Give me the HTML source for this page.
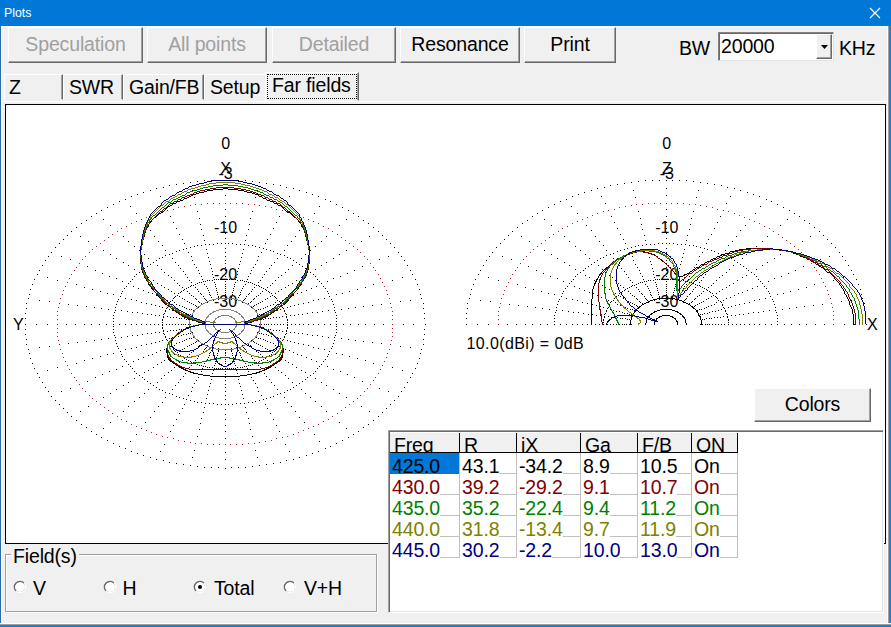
<!DOCTYPE html>
<html><head><meta charset="utf-8"><title>Plots</title>
<style>
html,body{margin:0;padding:0;}
body{width:891px;height:627px;overflow:hidden;background:#f0f0f0;font-family:"Liberation Sans",sans-serif;font-size:19.5px;letter-spacing:-0.15px;color:#000;position:relative;}
.abs{position:absolute;}
#titlebar{left:0;top:0;width:891px;height:26px;background:#0078d7;}
#title{left:4px;top:5px;letter-spacing:0;font-size:12.3px;color:#fff;line-height:16px;}
#bl{left:0;top:26px;width:1px;height:601px;background:#2b6ca8;box-shadow:1px 0 0 #fff;}
#br{left:887px;top:26px;width:4px;height:601px;background:linear-gradient(90deg,#fff 0,#fff 1px,#a0a0a0 1px,#a0a0a0 2px,#54708c 2px,#54708c 3px,#2d7dc4 3px);}
#bb{left:0;top:623px;width:891px;height:4px;background:linear-gradient(180deg,#fff 0,#fff 1px,#a0a0a0 1px,#a0a0a0 2px,#6a6a6a 2px,#6a6a6a 3px,#1883d7 3px);}
.btn{box-sizing:border-box;height:36px;top:27px;border:1px solid;border-color:#fff #696969 #696969 #fff;box-shadow:inset -1px -1px 0 #a0a0a0;background:#f0f0f0;text-align:center;line-height:33px;font-size:19.5px;}
.dis{color:#a0a0a0;}
.tab{top:75px;height:24px;line-height:24px;font-size:19.5px;white-space:nowrap;}
.tabbox{top:74px;height:26px;box-sizing:border-box;border:1px solid;border-color:#fff #696969 #f0f0f0 #fff;box-shadow:inset -1px 0 0 #a0a0a0;}
#panel{left:5px;top:104px;width:881px;height:440px;box-sizing:border-box;background:#fff;border:1px solid #000;border-top-color:#000;}
.lbl{letter-spacing:0;font-size:16px;line-height:18px;white-space:nowrap;margin-top:1.5px;}
</style></head><body>
<div id="titlebar" class="abs"></div>
<div id="title" class="abs">Plots</div>
<svg class="abs" style="left:869px;top:7px" width="12" height="12" viewBox="0 0 12 12"><path d="M1 1L11 11M11 1L1 11" stroke="#fff" stroke-width="1.2" fill="none"/></svg>
<div class="abs" style="left:1px;top:26px;width:888px;height:1px;background:#fff;"></div>
<div id="bl" class="abs"></div><div id="br" class="abs"></div><div id="bb" class="abs"></div>

<div class="abs btn dis" style="left:8px;width:135px;">Speculation</div>
<div class="abs btn dis" style="left:147px;width:120px;">All points</div>
<div class="abs btn dis" style="left:272px;width:124px;">Detailed</div>
<div class="abs btn" style="left:400px;width:120px;">Resonance</div>
<div class="abs btn" style="left:524px;width:92px;">Print</div>

<div class="abs" style="left:679px;top:37px;line-height:22px;">BW</div>
<div class="abs" style="left:718px;top:32px;width:116px;height:29px;box-sizing:border-box;background:#fff;border:1px solid;border-color:#828282 #e3e3e3 #e3e3e3 #828282;box-shadow:inset 1px 1px 0 #696969;"></div>
<div class="abs" style="left:721px;top:35px;line-height:22px;">20000</div>
<div class="abs" style="left:816px;top:34px;width:16px;height:25px;box-sizing:border-box;background:#f0f0f0;border:1px solid;border-color:#fff #696969 #696969 #fff;box-shadow:inset -1px -1px 0 #a0a0a0;"></div>
<svg class="abs" style="left:821px;top:45px" width="8" height="4" viewBox="0 0 8 4"><path d="M0 0H7L3.5 4Z" fill="#000"/></svg>
<div class="abs" style="left:839px;top:37px;line-height:22px;">KHz</div>

<div class="abs tabbox" style="left:4px;width:59px;"></div>
<div class="abs tabbox" style="left:63px;width:60px;"></div>
<div class="abs tabbox" style="left:123px;width:81px;"></div>
<div class="abs tabbox" style="left:204px;width:62px;border-right:none;box-shadow:none;"></div>
<div class="abs tab" style="left:9px;">Z</div>
<div class="abs tab" style="left:69px;">SWR</div>
<div class="abs tab" style="left:129px;">Gain/FB</div>
<div class="abs tab" style="left:210px;">Setup</div>
<div class="abs" style="left:265px;top:72px;width:94px;height:29px;box-sizing:border-box;background:#f0f0f0;border:1px solid;border-color:#fff #696969 #f0f0f0 #fff;box-shadow:inset -1px 0 0 #a0a0a0;"></div>
<div class="abs" style="left:267px;top:74px;width:90px;height:25px;box-sizing:border-box;border:1px dotted #000;"></div>
<div class="abs tab" style="left:272px;top:73px;">Far fields</div>

<div class="abs" style="left:2px;top:101px;width:886px;height:1px;background:#fff;"></div>
<div id="panel" class="abs"></div>
<div class="abs lbl" style="left:195.6px;width:60px;text-align:center;top:133.5px;">0</div>
<div class="abs lbl" style="left:195.6px;width:60px;text-align:center;top:158.5px;">X</div>
<div class="abs lbl" style="left:195.6px;width:60px;text-align:center;top:163px;">-3</div>
<div class="abs lbl" style="left:195.6px;width:60px;text-align:center;top:217px;">-10</div>
<div class="abs lbl" style="left:195.6px;width:60px;text-align:center;top:264.5px;">-20</div>
<div class="abs lbl" style="left:195.6px;width:60px;text-align:center;top:291px;">-30</div>
<div class="abs lbl" style="left:636.8px;width:60px;text-align:center;top:133.5px;">0</div>
<div class="abs lbl" style="left:636.8px;width:60px;text-align:center;top:158.5px;">Z</div>
<div class="abs lbl" style="left:636.8px;width:60px;text-align:center;top:163px;">-3</div>
<div class="abs lbl" style="left:636.8px;width:60px;text-align:center;top:217px;">-10</div>
<div class="abs lbl" style="left:636.8px;width:60px;text-align:center;top:264.5px;">-20</div>
<div class="abs lbl" style="left:636.8px;width:60px;text-align:center;top:291px;">-30</div>
<div class="abs lbl" style="left:13px;top:314px;">Y</div>
<div class="abs lbl" style="left:867px;top:314px;">X</div>
<div class="abs lbl" style="left:466.5px;top:333px;letter-spacing:0.4px;">10.0(dBi) = 0dB</div>

<div class="abs" style="left:6px;top:105px;width:878px;height:437px;overflow:hidden;">
<svg id="plot" width="878" height="437" viewBox="6 105 878 437">
<defs><clipPath id="hz"><rect x="440" y="100" width="445" height="225"/></clipPath></defs>
<g shape-rendering="crispEdges" fill="none" stroke-width="1"><path transform="translate(0,0.5)" stroke="#000" d="M225 180h1M231 180h1M238 180h1M245 180h1M252 181h1M259 182h1M266 183h1M273 184h1M280 185h1M286 187h1M293 188h1M299 190h1M306 192h1M312 194h1M318 196h1M325 199h1M330 201h1M336 204h1M342 207h1M348 210h1M353 213h1M358 216h1M363 220h1M368 223h1M373 227h1M378 231h1M382 235h1M386 239h1M390 243h1M394 247h1M398 252h1M401 256h1M404 260h1M407 265h1M410 270h1M412 274h1M415 279h1M417 284h1M419 289h1M420 294h1M421 298h1M423 303h1M423 308h1M424 313h1M424 318h1M425 324h1M424 329h1M424 334h1M423 339h1M423 344h1M421 349h1M420 353h1M419 358h1M417 363h1M415 368h1M412 373h1M410 377h1M407 382h1M404 387h1M401 391h1M398 396h1M394 400h1M390 404h1M386 408h1M382 412h1M378 416h1M373 420h1M368 424h1M363 427h1M358 431h1M353 434h1M348 437h1M342 440h1M336 443h1M330 446h1M325 448h1M318 451h1M312 453h1M306 455h1M299 457h1M293 459h1M286 460h1M280 462h1M273 463h1M266 464h1M259 465h1M252 466h1M245 467h1M238 467h1M231 467h1M225 468h1M218 467h1M211 467h1M204 467h1M197 466h1M190 465h1M183 464h1M176 463h1M169 462h1M163 460h1M156 459h1M150 457h1M143 455h1M137 453h1M131 451h1M125 448h1M119 446h1M113 443h1M107 440h1M101 437h1M96 434h1M91 431h1M86 427h1M81 424h1M76 420h1M71 416h1M67 412h1M63 408h1M59 404h1M55 400h1M51 396h1M48 391h1M45 387h1M42 382h1M39 377h1M37 373h1M34 368h1M32 363h1M30 358h1M29 353h1M28 349h1M26 344h1M26 339h1M25 334h1M25 329h1M25 324h1M25 318h1M25 313h1M26 308h1M26 303h1M28 298h1M29 294h1M30 289h1M32 284h1M34 279h1M37 274h1M39 270h1M42 265h1M45 260h1M48 256h1M51 252h1M55 247h1M59 243h1M63 239h1M67 235h1M71 231h1M76 227h1M81 223h1M86 220h1M91 216h1M96 213h1M101 210h1M107 207h1M113 204h1M119 201h1M125 199h1M131 196h1M137 194h1M143 192h1M150 190h1M156 188h1M163 187h1M169 185h1M176 184h1M183 183h1M190 182h1M197 181h1M204 180h1M211 180h1M218 180h1M225 243h1M228 243h1M232 243h1M236 244h1M240 244h1M244 244h1M248 245h1M252 245h1M255 246h1M259 247h1M263 248h1M266 249h1M270 250h1M273 251h1M277 253h1M280 254h1M284 255h1M287 257h1M290 258h1M293 260h1M296 262h1M299 264h1M302 266h1M305 268h1M307 270h1M310 272h1M313 274h1M315 276h1M317 279h1M319 281h1M321 283h1M323 286h1M325 288h1M327 291h1M328 293h1M329 296h1M331 299h1M332 301h1M333 304h1M334 307h1M334 310h1M335 312h1M336 315h1M336 318h1M336 321h1M336 324h1M336 326h1M336 329h1M336 332h1M335 335h1M334 337h1M334 340h1M333 343h1M332 346h1M331 348h1M329 351h1M328 354h1M327 356h1M325 359h1M323 361h1M321 364h1M319 366h1M317 368h1M315 371h1M313 373h1M310 375h1M307 377h1M305 379h1M302 381h1M299 383h1M296 385h1M293 387h1M290 389h1M287 390h1M284 392h1M280 393h1M277 394h1M273 396h1M270 397h1M266 398h1M263 399h1M259 400h1M255 401h1M252 402h1M248 402h1M244 403h1M240 403h1M236 403h1M232 404h1M228 404h1M225 404h1M221 404h1M217 404h1M213 403h1M209 403h1M205 403h1M201 402h1M197 402h1M194 401h1M190 400h1M186 399h1M183 398h1M179 397h1M176 396h1M172 394h1M169 393h1M165 392h1M162 390h1M159 389h1M156 387h1M153 385h1M150 383h1M147 381h1M144 379h1M142 377h1M139 375h1M136 373h1M134 371h1M132 368h1M130 366h1M128 364h1M126 361h1M124 359h1M122 356h1M121 354h1M120 351h1M118 348h1M117 346h1M116 343h1M115 340h1M115 337h1M114 335h1M113 332h1M113 329h1M113 326h1M113 324h1M113 321h1M113 318h1M113 315h1M114 312h1M115 310h1M115 307h1M116 304h1M117 301h1M118 299h1M120 296h1M121 293h1M122 291h1M124 288h1M126 286h1M128 283h1M130 281h1M132 279h1M134 276h1M136 274h1M139 272h1M142 270h1M144 268h1M147 266h1M150 264h1M153 262h1M156 260h1M159 258h1M162 257h1M165 255h1M169 254h1M172 253h1M176 251h1M179 250h1M183 249h1M186 248h1M190 247h1M194 246h1M197 245h1M201 245h1M205 244h1M209 244h1M213 244h1M217 243h1M221 243h1M225 279h1M227 279h1M229 279h1M231 279h1M233 279h1M235 279h1M237 280h1M240 280h1M242 280h1M244 281h1M246 281h1M248 282h1M250 282h1M252 283h1M254 284h1M256 285h1M258 285h1M259 286h1M261 287h1M263 288h1M265 289h1M266 290h1M268 291h1M269 292h1M271 293h1M272 295h1M274 296h1M275 297h1M276 298h1M277 300h1M279 301h1M280 302h1M281 304h1M281 305h1M282 307h1M283 308h1M284 310h1M284 311h1M285 313h1M286 314h1M286 316h1M286 317h1M287 319h1M287 320h1M287 322h1M287 324h1M287 325h1M287 327h1M287 328h1M286 330h1M286 331h1M286 333h1M285 334h1M284 336h1M284 337h1M283 339h1M282 340h1M281 342h1M281 343h1M280 345h1M279 346h1M277 347h1M276 349h1M275 350h1M274 351h1M272 352h1M271 354h1M269 355h1M268 356h1M266 357h1M265 358h1M263 359h1M261 360h1M259 361h1M258 362h1M256 362h1M254 363h1M252 364h1M250 365h1M248 365h1M246 366h1M244 366h1M242 367h1M240 367h1M237 367h1M235 368h1M233 368h1M231 368h1M229 368h1M227 368h1M225 368h1M222 368h1M220 368h1M218 368h1M216 368h1M214 368h1M212 367h1M209 367h1M207 367h1M205 366h1M203 366h1M201 365h1M199 365h1M197 364h1M195 363h1M193 362h1M191 362h1M190 361h1M188 360h1M186 359h1M184 358h1M183 357h1M181 356h1M180 355h1M178 354h1M177 352h1M175 351h1M174 350h1M173 349h1M172 347h1M170 346h1M169 345h1M168 343h1M168 342h1M167 340h1M166 339h1M165 337h1M165 336h1M164 334h1M163 333h1M163 331h1M163 330h1M162 328h1M162 327h1M162 325h1M162 324h1M162 322h1M162 320h1M162 319h1M163 317h1M163 316h1M163 314h1M164 313h1M165 311h1M165 310h1M166 308h1M167 307h1M168 305h1M168 304h1M169 302h1M170 301h1M172 300h1M173 298h1M174 297h1M175 296h1M177 295h1M178 293h1M180 292h1M181 291h1M183 290h1M184 289h1M186 288h1M188 287h1M190 286h1M191 285h1M193 285h1M195 284h1M197 283h1M199 282h1M201 282h1M203 281h1M205 281h1M207 280h1M209 280h1M212 280h1M214 279h1M216 279h1M218 279h1M220 279h1M222 279h1M225 188h1M225 195h1M225 209h1M225 216h1M225 222h1M225 228h1M225 233h1M225 238h1M225 248h1M225 252h1M225 256h1M225 260h1M225 263h1M225 267h1M225 270h1M225 273h1M225 276h1M225 281h1M225 284h1M225 286h1M225 288h1M225 290h1M225 292h1M225 294h1M225 295h1M225 297h1M225 298h1M257 190h1M255 197h1M252 211h1M250 218h1M249 224h1M248 229h1M246 235h1M245 240h1M243 249h1M242 253h1M241 257h1M240 261h1M239 264h1M238 268h1M237 271h1M237 274h1M236 277h1M235 282h1M234 284h1M234 286h1M233 288h1M233 290h1M232 292h1M232 294h1M231 296h1M231 297h1M231 299h1M289 196h1M285 203h1M279 216h1M276 222h1M273 228h1M270 234h1M267 239h1M265 243h1M261 252h1M258 256h1M257 260h1M255 264h1M253 267h1M251 270h1M250 273h1M248 276h1M247 279h1M245 284h1M243 286h1M242 288h1M241 290h1M240 292h1M240 294h1M239 295h1M238 297h1M237 299h1M236 300h1M319 206h1M314 213h1M304 225h1M299 230h1M295 236h1M291 241h1M287 245h1M284 250h1M277 258h1M274 262h1M271 265h1M269 268h1M266 271h1M264 274h1M262 277h1M260 280h1M258 282h1M254 287h1M252 289h1M251 291h1M249 293h1M248 294h1M246 296h1M245 298h1M244 299h1M243 300h1M242 302h1M346 219h1M339 225h1M326 236h1M321 241h1M315 246h1M310 250h1M305 254h1M301 258h1M292 265h1M288 269h1M285 272h1M281 275h1M278 277h1M275 280h1M272 283h1M270 285h1M267 287h1M262 291h1M260 293h1M258 295h1M256 296h1M254 298h1M253 299h1M251 301h1M250 302h1M248 303h1M247 304h1M369 236h1M361 241h1M346 250h1M339 254h1M333 258h1M326 262h1M321 265h1M315 269h1M305 275h1M301 277h1M296 280h1M292 283h1M288 285h1M285 287h1M281 289h1M278 291h1M275 293h1M270 296h1M267 298h1M265 299h1M262 301h1M260 302h1M258 303h1M256 304h1M254 305h1M253 306h1M251 307h1M388 256h1M379 259h1M362 266h1M354 270h1M347 273h1M340 276h1M333 278h1M327 281h1M316 286h1M311 288h1M306 290h1M301 292h1M297 293h1M293 295h1M289 297h1M285 298h1M282 300h1M275 302h1M273 304h1M270 305h1M267 306h1M265 307h1M263 308h1M260 309h1M258 309h1M256 310h1M255 311h1M402 277h1M392 280h1M373 284h1M365 287h1M357 289h1M349 291h1M342 293h1M336 294h1M324 298h1M318 299h1M313 300h1M308 302h1M303 303h1M298 304h1M294 305h1M290 306h1M287 307h1M280 309h1M277 310h1M274 311h1M271 311h1M268 312h1M266 313h1M263 313h1M261 314h1M259 314h1M257 315h1M410 300h1M400 301h1M381 304h1M372 305h1M363 306h1M355 307h1M348 308h1M341 309h1M328 310h1M322 311h1M317 312h1M312 312h1M307 313h1M302 314h1M298 314h1M294 315h1M290 315h1M282 316h1M279 317h1M276 317h1M273 317h1M270 318h1M268 318h1M265 318h1M263 319h1M261 319h1M259 319h1M413 324h1M403 324h1M383 324h1M374 324h1M365 324h1M358 324h1M350 324h1M343 324h1M330 324h1M324 324h1M318 324h1M313 324h1M308 324h1M303 324h1M299 324h1M295 324h1M291 324h1M283 324h1M280 324h1M277 324h1M274 324h1M271 324h1M268 324h1M266 324h1M264 324h1M261 324h1M259 324h1M410 347h1M400 346h1M381 343h1M372 342h1M363 341h1M355 340h1M348 339h1M341 338h1M328 337h1M322 336h1M317 335h1M312 335h1M307 334h1M302 333h1M298 333h1M294 332h1M290 332h1M282 331h1M279 330h1M276 330h1M273 330h1M270 329h1M268 329h1M265 329h1M263 328h1M261 328h1M259 328h1M402 370h1M392 367h1M373 363h1M365 360h1M357 358h1M349 356h1M342 354h1M336 353h1M324 349h1M318 348h1M313 347h1M308 345h1M303 344h1M298 343h1M294 342h1M290 341h1M287 340h1M280 338h1M277 337h1M274 336h1M271 336h1M268 335h1M266 334h1M263 334h1M261 333h1M259 333h1M257 332h1M388 391h1M379 388h1M362 381h1M354 377h1M347 374h1M340 371h1M333 369h1M327 366h1M316 361h1M311 359h1M306 357h1M301 355h1M297 354h1M293 352h1M289 350h1M285 349h1M282 347h1M275 345h1M273 343h1M270 342h1M267 341h1M265 340h1M263 339h1M260 338h1M258 338h1M256 337h1M255 336h1M369 411h1M361 406h1M346 397h1M339 393h1M333 389h1M326 385h1M321 382h1M315 378h1M305 372h1M301 370h1M296 367h1M292 364h1M288 362h1M285 360h1M281 358h1M278 356h1M275 354h1M270 351h1M267 349h1M265 348h1M262 346h1M260 345h1M258 344h1M256 343h1M254 342h1M253 341h1M251 340h1M346 428h1M339 422h1M326 411h1M321 406h1M315 401h1M310 397h1M305 393h1M301 389h1M292 382h1M288 378h1M285 375h1M281 372h1M278 370h1M275 367h1M272 364h1M270 362h1M267 360h1M262 356h1M260 354h1M258 352h1M256 351h1M254 349h1M253 348h1M251 346h1M250 345h1M248 344h1M247 343h1M319 441h1M314 434h1M304 422h1M299 417h1M295 411h1M291 406h1M287 402h1M284 397h1M277 389h1M274 385h1M271 382h1M269 379h1M266 376h1M264 373h1M262 370h1M260 367h1M258 365h1M254 360h1M252 358h1M251 356h1M249 354h1M248 353h1M246 351h1M245 349h1M244 348h1M243 347h1M242 345h1M289 451h1M285 444h1M279 431h1M276 425h1M273 419h1M270 413h1M267 408h1M265 404h1M261 395h1M258 391h1M257 387h1M255 383h1M253 380h1M251 377h1M250 374h1M248 371h1M247 368h1M245 363h1M243 361h1M242 359h1M241 357h1M240 355h1M240 353h1M239 352h1M238 350h1M237 348h1M236 347h1M257 457h1M255 450h1M252 436h1M250 429h1M249 423h1M248 418h1M246 412h1M245 407h1M243 398h1M242 394h1M241 390h1M240 386h1M239 383h1M238 379h1M237 376h1M237 373h1M236 370h1M235 365h1M234 363h1M234 361h1M233 359h1M233 357h1M232 355h1M232 353h1M231 351h1M231 350h1M231 348h1M225 459h1M225 452h1M225 438h1M225 431h1M225 425h1M225 419h1M225 414h1M225 409h1M225 399h1M225 395h1M225 391h1M225 387h1M225 384h1M225 380h1M225 377h1M225 374h1M225 371h1M225 366h1M225 363h1M225 361h1M225 359h1M225 357h1M225 355h1M225 353h1M225 352h1M225 350h1M225 349h1M192 457h1M194 450h1M197 436h1M199 429h1M200 423h1M201 418h1M203 412h1M204 407h1M206 398h1M207 394h1M208 390h1M209 386h1M210 383h1M211 379h1M212 376h1M212 373h1M213 370h1M214 365h1M215 363h1M215 361h1M216 359h1M216 357h1M217 355h1M217 353h1M218 351h1M218 350h1M218 348h1M160 451h1M164 444h1M170 431h1M173 425h1M176 419h1M179 413h1M182 408h1M184 404h1M188 395h1M191 391h1M192 387h1M194 383h1M196 380h1M198 377h1M199 374h1M201 371h1M202 368h1M204 363h1M206 361h1M207 359h1M208 357h1M209 355h1M209 353h1M210 352h1M211 350h1M212 348h1M213 347h1M130 441h1M136 434h1M145 422h1M150 417h1M154 411h1M158 406h1M162 402h1M165 397h1M172 389h1M175 385h1M178 382h1M180 379h1M183 376h1M185 373h1M187 370h1M189 367h1M191 365h1M195 360h1M197 358h1M198 356h1M200 354h1M201 353h1M203 351h1M204 349h1M205 348h1M206 347h1M207 345h1M103 428h1M110 422h1M123 411h1M128 406h1M134 401h1M139 397h1M144 393h1M148 389h1M157 382h1M161 378h1M164 375h1M168 372h1M171 370h1M174 367h1M177 364h1M179 362h1M182 360h1M187 356h1M189 354h1M191 352h1M193 351h1M195 349h1M196 348h1M198 346h1M199 345h1M201 344h1M202 343h1M80 411h1M88 406h1M103 397h1M110 393h1M116 389h1M123 385h1M128 382h1M134 378h1M144 372h1M148 370h1M153 367h1M157 364h1M161 362h1M164 360h1M168 358h1M171 356h1M174 354h1M179 351h1M182 349h1M184 348h1M187 346h1M189 345h1M191 344h1M193 343h1M195 342h1M196 341h1M198 340h1M61 391h1M70 388h1M87 381h1M95 377h1M102 374h1M109 371h1M116 369h1M122 366h1M133 361h1M138 359h1M143 357h1M148 355h1M152 354h1M156 352h1M160 350h1M164 349h1M167 347h1M174 345h1M176 343h1M179 342h1M182 341h1M184 340h1M186 339h1M189 338h1M191 338h1M193 337h1M194 336h1M47 370h1M57 367h1M76 363h1M84 360h1M92 358h1M100 356h1M107 354h1M113 353h1M125 349h1M131 348h1M136 347h1M141 345h1M146 344h1M151 343h1M155 342h1M159 341h1M162 340h1M169 338h1M172 337h1M175 336h1M178 336h1M181 335h1M183 334h1M186 334h1M188 333h1M190 333h1M192 332h1M39 347h1M49 346h1M68 343h1M77 342h1M86 341h1M94 340h1M101 339h1M108 338h1M121 337h1M127 336h1M132 335h1M137 335h1M142 334h1M147 333h1M151 333h1M155 332h1M159 332h1M167 331h1M170 330h1M173 330h1M176 330h1M179 329h1M181 329h1M184 329h1M186 328h1M188 328h1M190 328h1M36 324h1M47 324h1M66 324h1M75 324h1M84 324h1M91 324h1M99 324h1M106 324h1M119 324h1M125 324h1M131 324h1M136 324h1M141 324h1M146 324h1M150 324h1M154 324h1M158 324h1M166 324h1M169 324h1M172 324h1M175 324h1M178 324h1M181 324h1M183 324h1M185 324h1M188 324h1M190 324h1M39 300h1M49 301h1M68 304h1M77 305h1M86 306h1M94 307h1M101 308h1M108 309h1M121 310h1M127 311h1M132 312h1M137 312h1M142 313h1M147 314h1M151 314h1M155 315h1M159 315h1M167 316h1M170 317h1M173 317h1M176 317h1M179 318h1M181 318h1M184 318h1M186 319h1M188 319h1M190 319h1M47 277h1M57 280h1M76 284h1M84 287h1M92 289h1M100 291h1M107 293h1M113 294h1M125 298h1M131 299h1M136 300h1M141 302h1M146 303h1M151 304h1M155 305h1M159 306h1M162 307h1M169 309h1M172 310h1M175 311h1M178 311h1M181 312h1M183 313h1M186 313h1M188 314h1M190 314h1M192 315h1M61 256h1M70 259h1M87 266h1M95 270h1M102 273h1M109 276h1M116 278h1M122 281h1M133 286h1M138 288h1M143 290h1M148 292h1M152 293h1M156 295h1M160 297h1M164 298h1M167 300h1M174 302h1M176 304h1M179 305h1M182 306h1M184 307h1M186 308h1M189 309h1M191 309h1M193 310h1M194 311h1M80 236h1M88 241h1M103 250h1M110 254h1M116 258h1M123 262h1M128 265h1M134 269h1M144 275h1M148 277h1M153 280h1M157 283h1M161 285h1M164 287h1M168 289h1M171 291h1M174 293h1M179 296h1M182 298h1M184 299h1M187 301h1M189 302h1M191 303h1M193 304h1M195 305h1M196 306h1M198 307h1M103 219h1M110 225h1M123 236h1M128 241h1M134 246h1M139 250h1M144 254h1M148 258h1M157 265h1M161 269h1M164 272h1M168 275h1M171 277h1M174 280h1M177 283h1M179 285h1M182 287h1M187 291h1M189 293h1M191 295h1M193 296h1M195 298h1M196 299h1M198 301h1M199 302h1M201 303h1M202 304h1M130 206h1M136 213h1M145 225h1M150 230h1M154 236h1M158 241h1M162 245h1M165 250h1M172 258h1M175 262h1M178 265h1M180 268h1M183 271h1M185 274h1M187 277h1M189 280h1M191 282h1M195 287h1M197 289h1M198 291h1M200 293h1M201 294h1M203 296h1M204 298h1M205 299h1M206 300h1M207 302h1M160 196h1M164 203h1M170 216h1M173 222h1M176 228h1M179 234h1M182 239h1M184 243h1M188 252h1M191 256h1M192 260h1M194 264h1M196 267h1M198 270h1M199 273h1M201 276h1M202 279h1M204 284h1M206 286h1M207 288h1M208 290h1M209 292h1M209 294h1M210 295h1M211 297h1M212 299h1M213 300h1M192 190h1M194 197h1M197 211h1M199 218h1M200 224h1M201 229h1M203 235h1M204 240h1M206 249h1M207 253h1M208 257h1M209 261h1M210 264h1M211 268h1M212 271h1M212 274h1M213 277h1M214 282h1M215 284h1M215 286h1M216 288h1M216 290h1M217 292h1M217 294h1M218 296h1M218 297h1M218 299h1M666 180h1M672 180h1M679 180h1M686 180h1M693 181h1M700 182h1M707 183h1M714 184h1M721 185h1M727 187h1M734 188h1M740 190h1M747 192h1M753 194h1M759 196h1M766 199h1M771 201h1M777 204h1M783 207h1M789 210h1M794 213h1M799 216h1M804 220h1M809 223h1M814 227h1M819 231h1M823 235h1M827 239h1M831 243h1M835 247h1M839 252h1M842 256h1M845 260h1M848 265h1M851 270h1M853 274h1M856 279h1M858 284h1M860 289h1M861 294h1M862 298h1M864 303h1M864 308h1M865 313h1M865 318h1M866 324h1M466 324h1M466 318h1M466 313h1M467 308h1M467 303h1M469 298h1M470 294h1M471 289h1M473 284h1M475 279h1M478 274h1M480 270h1M483 265h1M486 260h1M489 256h1M492 252h1M496 247h1M500 243h1M504 239h1M508 235h1M512 231h1M517 227h1M522 223h1M527 220h1M532 216h1M537 213h1M542 210h1M548 207h1M554 204h1M560 201h1M566 199h1M572 196h1M578 194h1M584 192h1M591 190h1M597 188h1M604 187h1M610 185h1M617 184h1M624 183h1M631 182h1M638 181h1M645 180h1M652 180h1M659 180h1M666 243h1M669 243h1M673 243h1M677 244h1M681 244h1M685 244h1M689 245h1M693 245h1M696 246h1M700 247h1M704 248h1M707 249h1M711 250h1M714 251h1M718 253h1M721 254h1M725 255h1M728 257h1M731 258h1M734 260h1M737 262h1M740 264h1M743 266h1M746 268h1M748 270h1M751 272h1M754 274h1M756 276h1M758 279h1M760 281h1M762 283h1M764 286h1M766 288h1M768 291h1M769 293h1M770 296h1M772 299h1M773 301h1M774 304h1M775 307h1M775 310h1M776 312h1M777 315h1M777 318h1M777 321h1M777 324h1M554 324h1M554 321h1M554 318h1M554 315h1M555 312h1M556 310h1M556 307h1M557 304h1M558 301h1M559 299h1M561 296h1M562 293h1M563 291h1M565 288h1M567 286h1M569 283h1M571 281h1M573 279h1M575 276h1M577 274h1M580 272h1M583 270h1M585 268h1M588 266h1M591 264h1M594 262h1M597 260h1M600 258h1M603 257h1M606 255h1M610 254h1M613 253h1M617 251h1M620 250h1M624 249h1M627 248h1M631 247h1M635 246h1M638 245h1M642 245h1M646 244h1M650 244h1M654 244h1M658 243h1M662 243h1M666 279h1M668 279h1M670 279h1M672 279h1M674 279h1M676 279h1M678 280h1M681 280h1M683 280h1M685 281h1M687 281h1M689 282h1M691 282h1M693 283h1M695 284h1M697 285h1M699 285h1M700 286h1M702 287h1M704 288h1M706 289h1M707 290h1M709 291h1M710 292h1M712 293h1M713 295h1M715 296h1M716 297h1M717 298h1M718 300h1M720 301h1M721 302h1M722 304h1M722 305h1M723 307h1M724 308h1M725 310h1M725 311h1M726 313h1M727 314h1M727 316h1M727 317h1M728 319h1M728 320h1M728 322h1M728 324h1M603 324h1M603 322h1M603 320h1M603 319h1M604 317h1M604 316h1M604 314h1M605 313h1M606 311h1M606 310h1M607 308h1M608 307h1M609 305h1M609 304h1M610 302h1M611 301h1M613 300h1M614 298h1M615 297h1M616 296h1M618 295h1M619 293h1M621 292h1M622 291h1M624 290h1M625 289h1M627 288h1M629 287h1M631 286h1M632 285h1M634 285h1M636 284h1M638 283h1M640 282h1M642 282h1M644 281h1M646 281h1M648 280h1M650 280h1M653 280h1M655 279h1M657 279h1M659 279h1M661 279h1M663 279h1M666 188h1M666 195h1M666 209h1M666 216h1M666 222h1M666 228h1M666 233h1M666 238h1M666 248h1M666 252h1M666 256h1M666 260h1M666 263h1M666 267h1M666 270h1M666 273h1M666 276h1M666 281h1M666 284h1M666 286h1M666 288h1M666 290h1M666 292h1M666 294h1M666 295h1M666 297h1M666 298h1M698 190h1M696 197h1M693 211h1M691 218h1M690 224h1M689 229h1M687 235h1M686 240h1M684 249h1M683 253h1M682 257h1M681 261h1M680 264h1M679 268h1M678 271h1M678 274h1M677 277h1M676 282h1M675 284h1M675 286h1M674 288h1M674 290h1M673 292h1M673 294h1M672 296h1M672 297h1M672 299h1M730 196h1M726 203h1M720 216h1M717 222h1M714 228h1M711 234h1M708 239h1M706 243h1M702 252h1M699 256h1M698 260h1M696 264h1M694 267h1M692 270h1M691 273h1M689 276h1M688 279h1M686 284h1M684 286h1M683 288h1M682 290h1M681 292h1M681 294h1M680 295h1M679 297h1M678 299h1M677 300h1M760 206h1M755 213h1M745 225h1M740 230h1M736 236h1M732 241h1M728 245h1M725 250h1M718 258h1M715 262h1M712 265h1M710 268h1M707 271h1M705 274h1M703 277h1M701 280h1M699 282h1M695 287h1M693 289h1M692 291h1M690 293h1M689 294h1M687 296h1M686 298h1M685 299h1M684 300h1M683 302h1M787 219h1M780 225h1M767 236h1M762 241h1M756 246h1M751 250h1M746 254h1M742 258h1M733 265h1M729 269h1M726 272h1M722 275h1M719 277h1M716 280h1M713 283h1M711 285h1M708 287h1M703 291h1M701 293h1M699 295h1M697 296h1M695 298h1M694 299h1M692 301h1M691 302h1M689 303h1M688 304h1M810 236h1M802 241h1M787 250h1M780 254h1M774 258h1M767 262h1M762 265h1M756 269h1M746 275h1M742 277h1M737 280h1M733 283h1M729 285h1M726 287h1M722 289h1M719 291h1M716 293h1M711 296h1M708 298h1M706 299h1M703 301h1M701 302h1M699 303h1M697 304h1M695 305h1M694 306h1M692 307h1M829 256h1M820 259h1M803 266h1M795 270h1M788 273h1M781 276h1M774 278h1M768 281h1M757 286h1M752 288h1M747 290h1M742 292h1M738 293h1M734 295h1M730 297h1M726 298h1M723 300h1M716 302h1M714 304h1M711 305h1M708 306h1M706 307h1M704 308h1M701 309h1M699 309h1M697 310h1M696 311h1M843 277h1M833 280h1M814 284h1M806 287h1M798 289h1M790 291h1M783 293h1M777 294h1M765 298h1M759 299h1M754 300h1M749 302h1M744 303h1M739 304h1M735 305h1M731 306h1M728 307h1M721 309h1M718 310h1M715 311h1M712 311h1M709 312h1M707 313h1M704 313h1M702 314h1M700 314h1M698 315h1M851 300h1M841 301h1M822 304h1M813 305h1M804 306h1M796 307h1M789 308h1M782 309h1M769 310h1M763 311h1M758 312h1M753 312h1M748 313h1M743 314h1M739 314h1M735 315h1M731 315h1M723 316h1M720 317h1M717 317h1M714 317h1M711 318h1M709 318h1M706 318h1M704 319h1M702 319h1M700 319h1M854 324h1M844 324h1M824 324h1M815 324h1M806 324h1M799 324h1M791 324h1M784 324h1M771 324h1M765 324h1M759 324h1M754 324h1M749 324h1M744 324h1M740 324h1M736 324h1M732 324h1M724 324h1M721 324h1M718 324h1M715 324h1M712 324h1M709 324h1M707 324h1M705 324h1M702 324h1M700 324h1M477 324h1M488 324h1M507 324h1M516 324h1M525 324h1M532 324h1M540 324h1M547 324h1M560 324h1M566 324h1M572 324h1M577 324h1M582 324h1M587 324h1M591 324h1M595 324h1M599 324h1M607 324h1M610 324h1M613 324h1M616 324h1M619 324h1M622 324h1M624 324h1M626 324h1M629 324h1M631 324h1M480 300h1M490 301h1M509 304h1M518 305h1M527 306h1M535 307h1M542 308h1M549 309h1M562 310h1M568 311h1M573 312h1M578 312h1M583 313h1M588 314h1M592 314h1M596 315h1M600 315h1M608 316h1M611 317h1M614 317h1M617 317h1M620 318h1M622 318h1M625 318h1M627 319h1M629 319h1M631 319h1M488 277h1M498 280h1M517 284h1M525 287h1M533 289h1M541 291h1M548 293h1M554 294h1M566 298h1M572 299h1M577 300h1M582 302h1M587 303h1M592 304h1M596 305h1M600 306h1M603 307h1M610 309h1M613 310h1M616 311h1M619 311h1M622 312h1M624 313h1M627 313h1M629 314h1M631 314h1M633 315h1M502 256h1M511 259h1M528 266h1M536 270h1M543 273h1M550 276h1M557 278h1M563 281h1M574 286h1M579 288h1M584 290h1M589 292h1M593 293h1M597 295h1M601 297h1M605 298h1M608 300h1M615 302h1M617 304h1M620 305h1M623 306h1M625 307h1M627 308h1M630 309h1M632 309h1M634 310h1M635 311h1M521 236h1M529 241h1M544 250h1M551 254h1M557 258h1M564 262h1M569 265h1M575 269h1M585 275h1M589 277h1M594 280h1M598 283h1M602 285h1M605 287h1M609 289h1M612 291h1M615 293h1M620 296h1M623 298h1M625 299h1M628 301h1M630 302h1M632 303h1M634 304h1M636 305h1M637 306h1M639 307h1M544 219h1M551 225h1M564 236h1M569 241h1M575 246h1M580 250h1M585 254h1M589 258h1M598 265h1M602 269h1M605 272h1M609 275h1M612 277h1M615 280h1M618 283h1M620 285h1M623 287h1M628 291h1M630 293h1M632 295h1M634 296h1M636 298h1M637 299h1M639 301h1M640 302h1M642 303h1M643 304h1M571 206h1M577 213h1M586 225h1M591 230h1M595 236h1M599 241h1M603 245h1M606 250h1M613 258h1M616 262h1M619 265h1M621 268h1M624 271h1M626 274h1M628 277h1M630 280h1M632 282h1M636 287h1M638 289h1M639 291h1M641 293h1M642 294h1M644 296h1M645 298h1M646 299h1M647 300h1M648 302h1M601 196h1M605 203h1M611 216h1M614 222h1M617 228h1M620 234h1M623 239h1M625 243h1M629 252h1M632 256h1M633 260h1M635 264h1M637 267h1M639 270h1M640 273h1M642 276h1M643 279h1M645 284h1M647 286h1M648 288h1M649 290h1M650 292h1M650 294h1M651 295h1M652 297h1M653 299h1M654 300h1M633 190h1M635 197h1M638 211h1M640 218h1M641 224h1M642 229h1M644 235h1M645 240h1M647 249h1M648 253h1M649 257h1M650 261h1M651 264h1M652 268h1M653 271h1M653 274h1M654 277h1M655 282h1M656 284h1M656 286h1M657 288h1M657 290h1M658 292h1M658 294h1M659 296h1M659 297h1M659 299h1"/><path transform="translate(0,0.5)" stroke="#b01c2c" d="M225 203h1M230 203h1M236 203h1M242 203h1M248 204h1M254 204h1M259 205h1M265 206h1M271 207h1M276 209h1M282 210h1M287 211h1M293 213h1M298 215h1M303 217h1M308 219h1M313 221h1M318 223h1M323 226h1M328 228h1M332 231h1M337 234h1M341 237h1M345 240h1M349 243h1M353 246h1M357 249h1M360 252h1M364 256h1M367 259h1M370 263h1M373 267h1M375 270h1M378 274h1M380 278h1M382 282h1M384 286h1M386 290h1M387 294h1M389 298h1M390 303h1M391 307h1M392 311h1M392 315h1M392 319h1M392 324h1M392 328h1M392 332h1M392 336h1M391 340h1M390 344h1M389 349h1M387 353h1M386 357h1M384 361h1M382 365h1M380 369h1M378 373h1M375 377h1M373 380h1M370 384h1M367 388h1M364 391h1M360 395h1M357 398h1M353 401h1M349 404h1M345 407h1M341 410h1M337 413h1M332 416h1M328 419h1M323 421h1M318 424h1M313 426h1M308 428h1M303 430h1M298 432h1M293 434h1M287 436h1M282 437h1M276 438h1M271 440h1M265 441h1M259 442h1M254 443h1M248 443h1M242 444h1M236 444h1M230 444h1M225 444h1M219 444h1M213 444h1M207 444h1M201 443h1M195 443h1M190 442h1M184 441h1M178 440h1M173 438h1M167 437h1M162 436h1M156 434h1M151 432h1M146 430h1M141 428h1M136 426h1M131 424h1M126 421h1M121 419h1M117 416h1M112 413h1M108 410h1M104 407h1M100 404h1M96 401h1M92 398h1M89 395h1M85 391h1M82 388h1M79 384h1M76 380h1M74 377h1M71 373h1M69 369h1M67 365h1M65 361h1M63 357h1M62 353h1M60 349h1M59 344h1M58 340h1M57 336h1M57 332h1M57 328h1M57 324h1M57 319h1M57 315h1M57 311h1M58 307h1M59 303h1M60 298h1M62 294h1M63 290h1M65 286h1M67 282h1M69 278h1M71 274h1M74 270h1M76 267h1M79 263h1M82 259h1M85 256h1M89 252h1M92 249h1M96 246h1M100 243h1M104 240h1M108 237h1M112 234h1M117 231h1M121 228h1M126 226h1M131 223h1M136 221h1M141 219h1M146 217h1M151 215h1M156 213h1M162 211h1M167 210h1M173 209h1M178 207h1M184 206h1M190 205h1M195 204h1M201 204h1M207 203h1M213 203h1M219 203h1M666 203h1M671 203h1M677 203h1M683 203h1M689 204h1M695 204h1M700 205h1M706 206h1M712 207h1M717 209h1M723 210h1M728 211h1M734 213h1M739 215h1M744 217h1M749 219h1M754 221h1M759 223h1M764 226h1M769 228h1M773 231h1M778 234h1M782 237h1M786 240h1M790 243h1M794 246h1M798 249h1M801 252h1M805 256h1M808 259h1M811 263h1M814 267h1M816 270h1M819 274h1M821 278h1M823 282h1M825 286h1M827 290h1M828 294h1M830 298h1M831 303h1M832 307h1M833 311h1M833 315h1M833 319h1M833 324h1M498 324h1M498 319h1M498 315h1M498 311h1M499 307h1M500 303h1M501 298h1M503 294h1M504 290h1M506 286h1M508 282h1M510 278h1M512 274h1M515 270h1M517 267h1M520 263h1M523 259h1M526 256h1M530 252h1M533 249h1M537 246h1M541 243h1M545 240h1M549 237h1M553 234h1M558 231h1M562 228h1M567 226h1M572 223h1M577 221h1M582 219h1M587 217h1M592 215h1M597 213h1M603 211h1M608 210h1M614 209h1M619 207h1M625 206h1M631 205h1M636 204h1M642 204h1M648 203h1M654 203h1M660 203h1"/></g>
<path transform="translate(0,0.5)" shape-rendering="crispEdges" fill="none" stroke="#808080" stroke-width="1" d="M216 298h18M212 299h4M234 299h4M209 300h3M238 300h3M207 301h2M241 301h2M205 302h2M243 302h2M203 303h2M245 303h2M201 304h2M247 304h2M200 305h1M249 305h1M198 306h2M250 306h2M197 307h1M252 307h1M196 308h2M252 308h2M195 309h1M219 309h12M254 309h1M194 310h1M216 310h3M231 310h3M255 310h1M193 311h2M213 311h3M234 311h3M255 311h2M193 312h1M212 312h2M236 312h2M256 312h1M192 313h1M210 313h2M238 313h2M257 313h1M192 314h1M209 314h2M239 314h2M257 314h1M191 315h1M208 315h1M221 315h8M241 315h1M258 315h1M190 316h2M207 316h2M218 316h3M229 316h3M241 316h2M258 316h2M190 317h1M206 317h2M217 317h2M231 317h2M242 317h2M259 317h1M190 318h1M206 318h1M215 318h2M233 318h2M243 318h1M259 318h1M190 319h1M205 319h1M215 319h1M234 319h1M244 319h1M259 319h1M189 320h1M205 320h1M214 320h1M235 320h1M244 320h1M260 320h1M189 321h1M205 321h1M213 321h2M235 321h2M244 321h1M260 321h1M189 322h1M205 322h1M213 322h1M236 322h1M244 322h1M260 322h1M189 323h1M204 323h1M213 323h1M236 323h1M245 323h1M260 323h1M189 324h1M204 324h1M213 324h1M236 324h1M245 324h1M260 324h1M189 325h1M205 325h1M213 325h1M236 325h1M244 325h1M260 325h1M189 326h1M205 326h1M213 326h2M235 326h2M244 326h1M260 326h1M189 327h1M205 327h1M214 327h1M235 327h1M244 327h1M260 327h1M190 328h1M205 328h1M215 328h1M234 328h1M244 328h1M259 328h1M190 329h1M206 329h1M215 329h2M233 329h2M243 329h1M259 329h1M190 330h1M206 330h2M217 330h2M231 330h2M242 330h2M259 330h1M190 331h2M207 331h2M218 331h3M229 331h3M241 331h2M258 331h2M191 332h1M208 332h1M221 332h8M241 332h1M258 332h1M192 333h1M209 333h2M239 333h2M257 333h1M192 334h1M210 334h2M238 334h2M257 334h1M193 335h1M212 335h2M236 335h2M256 335h1M193 336h2M213 336h3M234 336h3M255 336h2M194 337h1M216 337h3M231 337h3M255 337h1M195 338h1M219 338h12M254 338h1M196 339h2M252 339h2M197 340h1M252 340h1M198 341h2M250 341h2M200 342h1M249 342h1M201 343h2M247 343h2M203 344h2M245 344h2M205 345h2M243 345h2M207 346h2M241 346h2M209 347h3M238 347h3M212 348h4M234 348h4M216 349h18"/>
<path transform="translate(0,0.5)" shape-rendering="crispEdges" fill="none" stroke="#000" stroke-width="1" d="M657 298h18M653 299h4M675 299h4M650 300h3M679 300h3M648 301h2M682 301h2M646 302h2M684 302h2M644 303h2M686 303h2M642 304h2M688 304h2M641 305h1M690 305h1M639 306h2M691 306h2M638 307h1M693 307h1M637 308h2M693 308h2M636 309h1M660 309h12M695 309h1M635 310h1M657 310h3M672 310h3M696 310h1M634 311h2M654 311h3M675 311h3M696 311h2M634 312h1M653 312h2M677 312h2M697 312h1M633 313h1M651 313h2M679 313h2M698 313h1M633 314h1M650 314h2M680 314h2M698 314h1M632 315h1M649 315h1M662 315h8M682 315h1M699 315h1M631 316h2M648 316h2M659 316h3M670 316h3M682 316h2M699 316h2M631 317h1M647 317h2M658 317h2M672 317h2M683 317h2M700 317h1M631 318h1M647 318h1M656 318h2M674 318h2M684 318h1M700 318h1M631 319h1M646 319h1M656 319h1M675 319h1M685 319h1M700 319h1M630 320h1M646 320h1M655 320h1M676 320h1M685 320h1M701 320h1M630 321h1M646 321h1M654 321h2M676 321h2M685 321h1M701 321h1M630 322h1M646 322h1M654 322h1M677 322h1M685 322h1M701 322h1M630 323h1M645 323h1M654 323h1M677 323h1M686 323h1M701 323h1M630 324h1M645 324h1M654 324h1M677 324h1M686 324h1M701 324h1"/>
<g fill="none" stroke-width="1" shape-rendering="crispEdges" transform="translate(0,0.5)">
<path stroke="#000" d="M223 188h5M213 189h10M228 189h10M207 190h6M238 190h6M204 191h3M244 191h3M199 192h5M247 192h5M196 193h3M252 193h3M193 194h3M255 194h3M191 195h2M258 195h1M189 196h2M259 196h3M187 197h2M262 197h1M184 198h3M263 198h3M183 199h1M266 199h1M180 200h3M267 200h3M177 201h3M270 201h3M176 202h1M273 202h1M173 203h3M274 203h3M172 204h1M277 204h1M170 205h2M278 205h3M168 206h2M281 206h1M167 207h1M282 207h1M166 208h1M283 208h1M165 209h1M284 209h1M164 210h1M285 210h1M163 211h1M286 211h1M161 212h2M287 212h3M159 213h2M290 213h1M158 214h1M291 214h1M157 215h1M292 215h1M156 216h1M293 216h1M154 217h2M294 217h2M153 218h1M296 218h1M152 219h1M297 219h1M151 220h1M298 220h1M151 221h1M298 221h1M150 222h1M299 222h1M149 223h1M300 223h1M148 224h1M301 224h1M148 225h1M301 225h1M148 226h1M301 226h1M147 227h1M302 227h1M146 228h1M303 228h1M146 229h1M303 229h1M145 230h1M304 230h1M145 231h1M304 231h1M145 232h1M304 232h1M144 233h1M305 233h1M144 234h1M305 234h1M144 235h1M305 235h1M144 236h1M305 236h1M143 237h1M306 237h1M143 238h1M306 238h1M143 239h1M306 239h1M142 240h1M306 240h1M142 241h1M307 241h1M142 242h1M307 242h1M142 243h1M307 243h1M142 244h1M307 244h1M141 245h1M308 245h1M141 246h1M308 246h1M141 247h1M308 247h1M141 248h1M308 248h1M141 249h1M308 249h1M140 250h1M309 250h1M140 251h1M309 251h1M140 252h1M309 252h1M140 253h1M309 253h1M140 254h1M309 254h1M140 255h1M309 255h1M140 256h1M309 256h1M140 257h1M309 257h1M140 258h1M309 258h1M140 259h1M309 259h1M140 260h1M309 260h1M140 261h1M309 261h1M140 262h1M309 262h1M140 263h1M309 263h1M141 264h1M308 264h1M141 265h1M308 265h1M141 266h1M308 266h1M141 267h1M308 267h1M141 268h1M308 268h1M141 269h1M308 269h1M142 270h1M307 270h1M142 271h1M307 271h1M142 272h1M307 272h1M143 273h1M306 273h1M143 274h1M306 274h1M144 275h1M306 275h1M144 276h1M305 276h1M144 277h1M305 277h1M145 278h1M304 278h1M146 279h1M303 279h1M146 280h1M303 280h1M147 281h1M302 281h1M148 282h1M301 282h1M148 283h1M301 283h1M148 284h1M301 284h1M149 285h1M300 285h1M150 286h1M299 286h1M151 287h1M298 287h1M151 288h1M298 288h1M152 289h1M297 289h1M153 290h1M296 290h1M154 291h1M295 291h1M155 292h1M294 292h1M156 293h1M293 293h1M156 294h1M293 294h1M157 295h1M292 295h1M158 296h1M291 296h1M159 297h1M290 297h1M160 298h1M289 298h1M161 299h1M288 299h1M161 300h1M288 300h1M162 301h2M286 301h2M163 302h1M286 302h1M164 303h1M285 303h1M165 304h2M283 304h2M167 305h1M282 305h1M168 306h2M280 306h2M170 307h1M279 307h1M171 308h2M277 308h2M172 309h1M277 309h1M173 310h2M275 310h2M175 311h2M273 311h2M176 312h2M272 312h2M178 313h2M270 313h2M179 314h2M269 314h2M181 315h2M267 315h2M182 316h2M266 316h2M184 317h3M263 317h3M187 318h2M261 318h2M189 319h3M258 319h3M192 320h4M254 320h4M196 321h2M252 321h2M198 322h5M247 322h5M203 323h2M245 323h2M198 324h5M247 324h5M193 325h6M251 325h6M189 326h4M257 326h4M186 327h3M261 327h3M185 328h2M263 328h2M183 329h2M265 329h2M181 330h2M267 330h2M180 331h2M268 331h2M178 332h2M270 332h2M177 333h2M271 333h2M176 334h1M273 334h1M175 335h1M274 335h1M174 336h1M275 336h1M172 337h2M276 337h2M171 338h2M277 338h2M171 339h1M278 339h1M170 340h1M279 340h1M169 341h1M280 341h1M168 342h2M280 342h2M168 343h1M281 343h1M167 344h2M281 344h2M167 345h1M282 345h1M167 346h1M282 346h1M167 347h1M282 347h1M166 348h2M282 348h2M166 349h1M283 349h1M166 350h1M283 350h1M166 351h1M283 351h1M166 352h2M282 352h2M167 353h1M282 353h1M167 354h1M282 354h1M167 355h1M282 355h1M167 356h1M282 356h1M167 357h2M281 357h2M168 358h1M281 358h1M168 359h2M280 359h2M169 360h2M279 360h2M170 361h2M278 361h2M172 362h2M276 362h2M173 363h3M274 363h3M175 364h2M273 364h2M176 365h2M272 365h2M178 366h2M270 366h2M179 367h3M268 367h3M181 368h3M266 368h3M183 369h3M264 369h3M185 370h3M262 370h3M188 371h3M259 371h3M190 372h4M256 372h4M193 373h5M252 373h5M198 374h5M247 374h5M203 375h7M240 375h7M210 376h30"/>
<path stroke="#800000" d="M216 187h18M210 188h6M234 188h7M205 189h5M241 189h5M200 190h5M246 190h4M197 191h3M250 191h3M194 192h3M253 192h3M193 193h1M256 193h2M190 194h3M258 194h3M187 195h3M261 195h3M185 196h2M264 196h1M182 197h3M265 197h3M181 198h1M268 198h1M178 199h3M269 199h3M177 200h1M272 200h1M174 201h3M273 201h3M173 202h1M276 202h1M170 203h3M277 203h3M169 204h1M280 204h1M168 205h1M281 205h1M167 206h1M282 206h1M166 207h1M283 207h2M164 208h2M285 208h1M163 209h1M286 209h1M162 210h1M287 210h1M160 211h2M288 211h2M159 212h1M290 212h1M158 213h1M291 213h1M157 214h1M292 214h1M156 215h1M293 215h1M155 216h1M294 216h1M154 217h1M295 217h1M153 218h1M296 218h1M152 219h1M297 219h1M151 220h1M298 220h1M150 221h1M299 221h1M149 222h1M300 222h1M149 223h1M300 223h1M148 224h1M301 224h1M147 225h1M302 225h1M147 226h1M302 226h1M146 227h1M302 227h1M146 228h1M303 228h1M146 229h1M303 229h1M145 230h1M304 230h1M145 231h1M304 231h1M144 232h1M304 232h1M144 233h1M305 233h1M144 234h1M305 234h1M143 235h1M306 235h1M143 236h1M306 236h1M143 237h1M306 237h1M143 238h1M306 238h1M143 239h1M306 239h1M142 240h1M306 240h1M142 241h1M307 241h1M142 242h1M307 242h1M142 243h1M307 243h1M141 244h1M308 244h1M141 245h1M308 245h1M141 246h1M308 246h1M141 247h1M308 247h1M141 248h1M308 248h1M141 249h1M308 249h1M140 250h1M309 250h1M140 251h1M309 251h1M140 252h1M309 252h1M140 253h1M309 253h1M140 254h1M309 254h1M140 255h1M309 255h1M140 256h1M309 256h1M140 257h1M309 257h1M140 258h1M309 258h1M140 259h1M309 259h1M140 260h1M309 260h1M140 261h1M309 261h1M141 262h1M308 262h1M141 263h1M308 263h1M141 264h1M308 264h1M141 265h1M308 265h1M141 266h1M308 266h1M141 267h1M308 267h1M141 268h1M308 268h1M142 269h1M307 269h1M142 270h1M307 270h1M143 271h1M306 271h1M143 272h1M306 272h1M143 273h1M306 273h1M143 274h1M306 274h1M144 275h1M305 275h1M144 276h1M305 276h1M145 277h1M304 277h1M146 278h1M303 278h1M146 279h1M303 279h1M147 280h1M303 280h1M147 281h1M302 281h1M148 282h1M301 282h1M148 283h1M301 283h1M149 284h1M300 284h1M150 285h1M299 285h1M151 286h1M298 286h1M152 287h1M297 287h1M152 288h1M297 288h1M153 289h1M297 289h1M153 290h1M296 290h1M154 291h1M295 291h1M155 292h1M294 292h1M156 293h1M293 293h1M157 294h1M292 294h1M158 295h1M291 295h1M159 296h1M290 296h1M160 297h1M289 297h1M160 298h1M289 298h1M161 299h2M287 299h2M162 300h1M287 300h1M163 301h1M286 301h1M164 302h1M285 302h1M165 303h2M283 303h2M166 304h1M283 304h1M167 305h1M282 305h1M168 306h2M280 306h2M170 307h1M279 307h1M171 308h2M277 308h2M173 309h1M276 309h1M174 310h2M274 310h2M176 311h1M273 311h1M177 312h2M271 312h2M179 313h1M270 313h1M180 314h2M268 314h2M182 315h2M266 315h2M184 316h2M264 316h2M186 317h3M261 317h3M188 318h2M260 318h2M190 319h3M257 319h3M193 320h4M253 320h4M197 321h3M250 321h3M200 322h5M245 322h5M202 323h3M245 323h3M199 324h4M247 324h4M194 325h5M251 325h5M189 326h5M256 326h5M187 327h2M261 327h2M185 328h2M263 328h2M183 329h2M265 329h2M182 330h2M266 330h2M180 331h2M268 331h2M178 332h3M269 332h3M177 333h2M271 333h2M176 334h2M272 334h2M175 335h1M274 335h1M174 336h1M275 336h1M173 337h1M276 337h1M172 338h1M277 338h1M171 339h1M278 339h1M170 340h1M279 340h1M169 341h1M280 341h1M168 342h2M280 342h2M168 343h1M281 343h1M167 344h2M281 344h2M167 345h1M282 345h1M167 346h1M282 346h1M167 347h1M282 347h1M167 348h1M282 348h1M167 349h1M282 349h1M167 350h1M282 350h1M167 351h1M282 351h1M167 352h1M282 352h1M167 353h1M282 353h1M167 354h1M282 354h1M168 355h1M281 355h1M168 356h1M281 356h1M169 357h1M280 357h1M169 358h2M279 358h2M170 359h1M279 359h1M171 360h1M278 360h1M172 361h2M276 361h2M173 362h2M275 362h2M175 363h2M273 363h2M176 364h2M272 364h2M178 365h2M270 365h2M180 366h2M268 366h2M182 367h3M265 367h3M185 368h4M261 368h4M189 369h72"/>
<path stroke="#008000" d="M223 184h5M213 185h10M228 185h10M208 186h5M238 186h5M203 187h5M243 187h5M200 188h3M248 188h3M197 189h3M251 189h3M193 190h4M254 190h3M190 191h3M257 191h3M187 192h3M260 192h3M186 193h1M263 193h1M185 194h1M264 194h2M182 195h3M266 195h3M180 196h2M269 196h1M178 197h2M270 197h3M176 198h2M273 198h1M173 199h3M274 199h3M172 200h1M277 200h1M171 201h1M278 201h2M168 202h3M280 202h2M167 203h1M282 203h1M166 204h1M283 204h1M165 205h1M284 205h1M164 206h1M285 206h2M162 207h2M287 207h1M161 208h1M288 208h1M160 209h1M289 209h1M159 210h1M290 210h1M158 211h1M291 211h1M157 212h1M292 212h1M156 213h1M293 213h1M155 214h1M294 214h1M153 215h2M295 215h2M152 216h1M297 216h1M151 217h1M297 217h1M151 218h1M298 218h1M150 219h1M299 219h1M149 220h1M300 220h1M149 221h1M300 221h1M148 222h1M301 222h1M147 223h1M302 223h1M147 224h1M302 224h1M147 225h1M302 225h1M146 226h1M303 226h1M146 227h1M303 227h1M145 228h1M304 228h1M145 229h1M304 229h1M145 230h1M304 230h1M144 231h1M305 231h1M144 232h1M305 232h1M143 233h1M305 233h1M143 234h1M306 234h1M143 235h1M306 235h1M143 236h1M306 236h1M143 237h1M306 237h1M143 238h1M306 238h1M142 239h1M307 239h1M142 240h1M307 240h1M142 241h1M307 241h1M142 242h1M307 242h1M142 243h1M307 243h1M141 244h1M308 244h1M141 245h1M308 245h1M141 246h1M308 246h1M141 247h1M308 247h1M141 248h1M308 248h1M140 249h1M309 249h1M140 250h1M309 250h1M140 251h1M309 251h1M140 252h1M309 252h1M140 253h1M309 253h1M140 254h1M309 254h1M140 255h1M309 255h1M140 256h1M309 256h1M140 257h1M309 257h1M141 258h1M309 258h1M141 259h1M308 259h1M141 260h1M308 260h1M141 261h1M308 261h1M141 262h1M308 262h1M141 263h1M308 263h1M141 264h1M308 264h1M141 265h1M308 265h1M141 266h1M308 266h1M142 267h1M307 267h1M142 268h1M307 268h1M142 269h1M307 269h1M143 270h1M307 270h1M143 271h1M306 271h1M143 272h1M306 272h1M144 273h1M305 273h1M144 274h1M305 274h1M145 275h1M304 275h1M145 276h1M304 276h1M145 277h1M304 277h1M146 278h1M303 278h1M147 279h1M302 279h1M147 280h1M302 280h1M148 281h1M301 281h1M149 282h1M300 282h1M150 283h1M300 283h1M150 284h1M299 284h1M150 285h1M299 285h1M151 286h1M298 286h1M152 287h1M297 287h1M153 288h1M296 288h1M154 289h1M295 289h1M155 290h1M294 290h1M156 291h1M293 291h1M157 292h1M292 292h1M157 293h1M292 293h1M158 294h1M291 294h1M159 295h1M290 295h1M160 296h1M289 296h1M160 297h1M289 297h1M161 298h2M287 298h2M163 299h1M286 299h1M163 300h1M286 300h1M164 301h1M285 301h1M165 302h2M283 302h2M167 303h1M282 303h1M168 304h1M281 304h1M169 305h1M280 305h1M170 306h2M278 306h2M172 307h1M277 307h1M173 308h2M275 308h2M175 309h1M274 309h1M176 310h2M272 310h2M177 311h2M271 311h2M179 312h2M269 312h2M181 313h2M267 313h2M182 314h2M266 314h2M184 315h2M264 315h2M186 316h2M262 316h2M188 317h2M260 317h2M190 318h3M257 318h3M193 319h3M254 319h3M196 320h3M251 320h3M198 321h5M247 321h5M202 322h3M245 322h3M202 323h3M245 323h3M198 324h5M247 324h5M193 325h5M252 325h5M190 326h3M257 326h3M187 327h3M260 327h3M185 328h3M262 328h3M184 329h2M264 329h2M182 330h2M266 330h2M180 331h2M268 331h2M179 332h2M269 332h2M178 333h1M271 333h1M177 334h1M272 334h1M175 335h2M273 335h2M174 336h1M275 336h1M173 337h1M276 337h1M172 338h1M277 338h1M171 339h2M277 339h2M170 340h1M279 340h1M169 341h1M280 341h1M168 342h1M281 342h1M168 343h1M281 343h1M167 344h2M281 344h2M167 345h1M282 345h1M167 346h1M282 346h1M167 347h1M282 347h1M167 348h1M282 348h1M167 349h1M282 349h1M168 350h1M281 350h1M168 351h1M281 351h1M168 352h2M280 352h2M169 353h1M280 353h1M169 354h2M279 354h2M170 355h1M279 355h1M170 356h2M278 356h2M172 357h1M220 357h10M277 357h1M173 358h2M215 358h6M229 358h6M275 358h2M175 359h2M210 359h5M235 359h5M273 359h2M176 360h3M206 360h5M239 360h5M271 360h3M178 361h3M202 361h5M243 361h5M269 361h3M181 362h7M194 362h8M248 362h8M262 362h7M187 363h8M255 363h8"/>
<path stroke="#808000" d="M216 182h19M209 183h7M235 183h6M206 184h3M241 184h4M201 185h5M245 185h5M198 186h3M250 186h3M195 187h3M253 187h3M191 188h4M256 188h3M188 189h3M259 189h3M187 190h1M262 190h2M184 191h3M264 191h3M182 192h2M267 192h1M181 193h1M268 193h1M178 194h3M269 194h3M177 195h1M272 195h2M175 196h2M274 196h1M173 197h2M275 197h3M171 198h2M278 198h1M170 199h1M279 199h1M169 200h1M280 200h2M166 201h3M282 201h2M165 202h1M284 202h1M164 203h1M285 203h1M163 204h1M286 204h2M161 205h2M288 205h1M160 206h1M289 206h1M159 207h1M290 207h1M158 208h1M291 208h1M157 209h1M292 209h1M156 210h1M293 210h1M155 211h1M294 211h1M154 212h1M295 212h1M153 213h1M296 213h1M152 214h1M297 214h1M151 215h1M298 215h1M150 216h1M299 216h1M150 217h1M299 217h1M150 218h1M299 218h1M149 219h1M300 219h1M148 220h1M301 220h1M147 221h1M302 221h1M147 222h1M302 222h1M147 223h1M302 223h1M146 224h1M303 224h1M146 225h1M303 225h1M145 226h1M304 226h1M145 227h1M304 227h1M145 228h1M304 228h1M144 229h1M305 229h1M144 230h1M305 230h1M143 231h1M305 231h1M143 232h1M306 232h1M143 233h1M306 233h1M143 234h1M306 234h1M143 235h1M306 235h1M142 236h1M307 236h1M142 237h1M307 237h1M142 238h1M307 238h1M142 239h1M307 239h1M142 240h1M307 240h1M142 241h1M307 241h1M141 242h1M307 242h1M141 243h1M308 243h1M141 244h1M308 244h1M141 245h1M308 245h1M141 246h1M308 246h1M140 247h1M309 247h1M140 248h1M309 248h1M140 249h1M309 249h1M140 250h1M309 250h1M140 251h1M309 251h1M140 252h1M309 252h1M140 253h1M309 253h1M140 254h1M309 254h1M140 255h1M309 255h1M141 256h1M308 256h1M141 257h1M308 257h1M141 258h1M308 258h1M141 259h1M308 259h1M141 260h1M308 260h1M141 261h1M308 261h1M141 262h1M308 262h1M141 263h1M308 263h1M141 264h1M308 264h1M142 265h1M307 265h1M142 266h1M307 266h1M142 267h1M307 267h1M143 268h1M306 268h1M143 269h1M306 269h1M143 270h1M306 270h1M143 271h1M306 271h1M144 272h1M305 272h1M144 273h1M305 273h1M145 274h1M305 274h1M145 275h1M304 275h1M146 276h1M303 276h1M146 277h1M303 277h1M147 278h1M302 278h1M148 279h1M302 279h1M148 280h1M301 280h1M148 281h1M301 281h1M149 282h1M300 282h1M150 283h1M299 283h1M151 284h1M298 284h1M152 285h1M298 285h1M152 286h1M297 286h1M153 287h1M296 287h1M154 288h1M295 288h1M155 289h1M294 289h1M156 290h1M293 290h1M157 291h1M292 291h1M158 292h1M291 292h1M158 293h1M291 293h1M159 294h1M290 294h1M160 295h1M289 295h1M161 296h1M288 296h1M161 297h1M288 297h1M162 298h2M286 298h2M164 299h1M285 299h1M164 300h1M285 300h1M165 301h1M284 301h1M166 302h1M283 302h1M167 303h2M280 303h3M169 304h2M279 304h1M171 305h1M278 305h1M172 306h1M277 306h1M173 307h2M275 307h2M175 308h1M274 308h1M176 309h2M272 309h2M178 310h1M271 310h1M179 311h1M270 311h1M180 312h2M268 312h2M182 313h2M266 313h2M184 314h2M264 314h2M186 315h2M262 315h2M188 316h2M260 316h2M190 317h3M257 317h3M193 318h2M255 318h2M195 319h3M252 319h3M197 320h4M249 320h4M200 321h4M205 321h5M241 321h9M204 322h1M210 322h6M235 322h6M245 322h1M202 323h4M244 323h4M198 324h5M247 324h5M194 325h5M251 325h5M191 326h3M256 326h3M188 327h3M259 327h3M186 328h2M262 328h2M184 329h2M264 329h2M182 330h2M266 330h2M181 331h2M267 331h2M179 332h2M269 332h2M178 333h2M270 333h2M176 334h3M271 334h3M175 335h2M273 335h2M174 336h2M274 336h2M173 337h1M276 337h1M172 338h1M277 338h1M171 339h1M278 339h1M170 340h2M278 340h2M170 341h1M217 341h3M230 341h3M279 341h1M169 342h2M216 342h2M219 342h4M227 342h4M232 342h2M279 342h2M169 343h1M215 343h2M222 343h6M233 343h2M280 343h1M169 344h1M214 344h1M235 344h1M280 344h1M169 345h1M213 345h1M236 345h1M280 345h1M169 346h1M212 346h1M237 346h1M280 346h1M169 347h1M210 347h2M238 347h2M280 347h1M169 348h2M209 348h2M239 348h2M279 348h2M170 349h1M208 349h2M240 349h2M279 349h1M171 350h1M206 350h2M242 350h2M278 350h1M171 351h2M205 351h2M243 351h2M277 351h2M172 352h2M203 352h2M245 352h2M276 352h2M173 353h2M201 353h2M247 353h2M275 353h2M175 354h2M199 354h2M249 354h2M273 354h2M177 355h2M196 355h3M251 355h3M271 355h2M178 356h6M191 356h5M254 356h5M266 356h6M183 357h9M258 357h9"/>
<path stroke="#000080" d="M212 180h26M207 181h5M238 181h5M204 182h3M243 182h4M199 183h5M247 183h5M196 184h3M252 184h3M192 185h4M255 185h3M189 186h3M258 186h3M188 187h1M261 187h2M185 188h3M263 188h3M183 189h2M266 189h1M182 190h1M267 190h2M179 191h3M269 191h3M177 192h2M272 192h1M176 193h1M273 193h1M175 194h1M274 194h2M172 195h3M276 195h3M170 196h2M279 196h1M169 197h1M280 197h1M168 198h1M281 198h2M166 199h2M283 199h1M164 200h2M284 200h2M163 201h1M286 201h1M162 202h1M287 202h1M161 203h1M287 203h1M161 204h1M288 204h1M160 205h1M289 205h2M158 206h2M291 206h1M157 207h1M292 207h1M156 208h1M293 208h1M155 209h1M294 209h1M154 210h1M295 210h1M153 211h1M296 211h1M152 212h1M297 212h1M151 213h1M298 213h1M150 214h1M299 214h1M150 215h1M299 215h1M149 216h1M299 216h1M149 217h1M300 217h1M148 218h1M301 218h1M148 219h1M301 219h1M147 220h1M301 220h1M147 221h1M302 221h1M146 222h1M303 222h1M146 223h1M303 223h1M145 224h1M303 224h1M145 225h1M304 225h1M145 226h1M304 226h1M144 227h1M305 227h1M144 228h1M305 228h1M144 229h1M305 229h1M143 230h1M306 230h1M143 231h1M306 231h1M143 232h1M306 232h1M143 233h1M306 233h1M142 234h1M307 234h1M142 235h1M307 235h1M142 236h1M307 236h1M142 237h1M307 237h1M142 238h1M307 238h1M141 239h1M307 239h1M141 240h1M308 240h1M141 241h1M308 241h1M141 242h1M308 242h1M141 243h1M308 243h1M141 244h1M308 244h1M141 245h1M308 245h1M140 246h1M309 246h1M140 247h1M309 247h1M140 248h1M309 248h1M140 249h1M309 249h1M140 250h1M309 250h1M140 251h1M309 251h1M140 252h1M309 252h1M140 253h1M309 253h1M140 254h1M309 254h1M141 255h1M308 255h1M141 256h1M308 256h1M141 257h1M308 257h1M141 258h1M308 258h1M141 259h1M308 259h1M141 260h1M308 260h1M141 261h1M308 261h1M142 262h1M308 262h1M142 263h1M307 263h1M142 264h1M307 264h1M142 265h1M307 265h1M142 266h1M307 266h1M143 267h1M307 267h1M143 268h1M306 268h1M143 269h1M306 269h1M144 270h1M305 270h1M144 271h1M305 271h1M145 272h1M305 272h1M145 273h1M304 273h1M145 274h1M304 274h1M146 275h1M303 275h1M147 276h1M302 276h1M147 277h1M302 277h1M147 278h1M302 278h1M148 279h1M301 279h1M149 280h1M300 280h1M150 281h1M299 281h1M151 282h1M299 282h1M151 283h1M298 283h1M152 284h1M297 284h1M152 285h1M297 285h1M153 286h1M296 286h1M154 287h1M296 287h1M154 288h1M295 288h1M155 289h1M294 289h1M156 290h1M293 290h1M157 291h1M292 291h1M158 292h1M291 292h1M159 293h1M290 293h1M160 294h1M289 294h1M161 295h1M288 295h1M161 296h1M288 296h1M162 297h2M286 297h2M164 298h1M285 298h1M165 299h1M284 299h1M166 300h1M283 300h1M167 301h1M282 301h1M168 302h1M281 302h1M169 303h1M280 303h1M170 304h3M277 304h3M173 305h1M276 305h1M174 306h1M275 306h1M175 307h1M274 307h1M176 308h2M272 308h2M178 309h1M271 309h1M179 310h2M269 310h2M181 311h2M267 311h2M183 312h2M265 312h2M185 313h1M264 313h1M186 314h2M262 314h2M188 315h2M260 315h2M190 316h3M257 316h3M193 317h1M256 317h1M194 318h3M253 318h3M197 319h3M250 319h3M200 320h2M248 320h2M202 321h3M245 321h3M204 322h2M244 322h2M202 323h3M245 323h3M199 324h52M195 325h4M251 325h4M191 326h4M255 326h4M187 327h4M259 327h4M186 328h2M262 328h2M184 329h2M220 329h1M229 329h1M264 329h2M183 330h1M218 330h2M230 330h1M266 330h1M181 331h2M217 331h2M231 331h2M267 331h2M180 332h1M216 332h2M231 332h1M233 332h1M269 332h1M178 333h2M215 333h1M217 333h1M232 333h1M234 333h1M270 333h2M177 334h1M214 334h1M216 334h1M233 334h1M235 334h1M272 334h1M176 335h1M214 335h1M216 335h1M233 335h1M235 335h1M273 335h1M175 336h1M212 336h2M215 336h1M234 336h1M236 336h1M274 336h1M174 337h1M211 337h1M215 337h1M234 337h1M237 337h2M275 337h1M173 338h1M210 338h1M214 338h1M235 338h1M239 338h1M276 338h1M172 339h1M209 339h1M214 339h1M235 339h1M240 339h1M277 339h1M171 340h2M208 340h1M213 340h2M235 340h2M241 340h1M277 340h2M171 341h1M207 341h1M213 341h1M236 341h1M242 341h1M278 341h1M171 342h1M205 342h2M213 342h1M236 342h1M243 342h1M278 342h1M171 343h1M204 343h1M213 343h1M236 343h1M244 343h2M278 343h1M171 344h1M202 344h2M212 344h1M237 344h1M246 344h1M278 344h1M171 345h1M200 345h2M212 345h1M237 345h1M247 345h2M278 345h1M171 346h2M199 346h1M212 346h1M237 346h1M249 346h2M277 346h2M172 347h2M198 347h1M212 347h1M237 347h1M251 347h1M276 347h2M173 348h2M196 348h2M212 348h1M237 348h1M252 348h2M275 348h2M175 349h2M194 349h2M212 349h1M237 349h1M254 349h2M273 349h2M176 350h5M190 350h4M212 350h1M237 350h1M256 350h4M269 350h5M180 351h10M212 351h1M237 351h1M260 351h10M213 352h1M236 352h1M213 353h1M236 353h1M213 354h1M236 354h1M213 355h2M235 355h2M214 356h1M235 356h1M214 357h1M235 357h1M214 358h2M234 358h2M215 359h1M234 359h1M216 360h1M233 360h1M216 361h2M232 361h2M217 362h1M232 362h1M218 363h2M230 363h2M219 364h3M228 364h3M221 365h2M227 365h2M223 366h4"/>
<path stroke="#000" d="M746 248h24M739 249h7M770 249h11M735 250h4M781 250h5M637 251h8M730 251h5M786 251h5M632 252h5M645 252h4M729 252h1M791 252h2M630 253h3M649 253h3M725 253h4M793 253h3M627 254h3M652 254h3M722 254h3M796 254h3M624 255h3M655 255h1M720 255h2M799 255h1M623 256h2M656 256h2M717 256h3M800 256h3M621 257h2M657 257h1M716 257h1M803 257h3M619 258h2M658 258h2M713 258h3M806 258h1M617 259h3M660 259h1M711 259h2M807 259h3M616 260h1M661 260h2M710 260h1M810 260h1M614 261h2M662 261h2M707 261h3M811 261h2M612 262h2M664 262h1M705 262h2M813 262h2M611 263h2M665 263h2M704 263h1M815 263h1M610 264h2M666 264h1M701 264h3M816 264h2M609 265h1M667 265h2M700 265h1M818 265h1M608 266h1M668 266h1M699 266h1M819 266h2M606 267h2M669 267h2M696 267h3M821 267h2M605 268h1M670 268h1M695 268h1M823 268h1M604 269h1M671 269h1M693 269h2M824 269h1M603 270h1M671 270h2M692 270h1M825 270h1M602 271h1M673 271h1M690 271h2M826 271h1M601 272h1M674 272h1M689 272h1M827 272h3M600 273h2M675 273h1M687 273h2M830 273h1M599 274h2M676 274h1M684 274h3M831 274h1M599 275h1M677 275h2M683 275h2M832 275h1M598 276h1M678 276h5M833 276h1M598 277h1M834 277h1M597 278h1M834 278h1M596 279h2M835 279h1M596 280h1M836 280h1M595 281h2M837 281h1M595 282h1M838 282h1M594 283h2M839 283h1M594 284h1M839 284h1M594 285h1M840 285h1M593 286h1M841 286h1M593 287h1M841 287h1M593 288h1M842 288h1M592 289h1M843 289h1M592 290h1M843 290h1M592 291h1M844 291h1M592 292h1M844 292h1M592 293h1M844 293h1M592 294h1M845 294h1M592 295h1M846 295h1M592 296h1M846 296h1M592 297h1M847 297h1M592 298h1M847 298h1M591 299h1M848 299h1M591 300h1M848 300h1M591 301h1M849 301h1M591 302h1M849 302h1M591 303h1M849 303h1M591 304h1M849 304h1M591 305h1M850 305h1M591 306h1M850 306h1M591 307h1M851 307h1M591 308h1M851 308h1M591 309h1M852 309h1M591 310h1M852 310h1M591 311h1M852 311h1M591 312h1M852 312h1M591 313h1M852 313h1M591 314h1M853 314h1M591 315h1M853 315h1M591 316h1M853 316h1M591 317h1M853 317h1M591 318h1M853 318h1M591 319h1M853 319h1M591 320h1M853 320h1M591 321h1M853 321h1M591 322h1M853 322h1M591 323h1M853 323h1M591 324h1M853 324h1"/>
<path stroke="#800000" d="M751 248h20M743 249h8M771 249h8M738 250h5M779 250h7M637 251h6M734 251h4M786 251h5M632 252h5M643 252h6M732 252h2M791 252h3M630 253h3M649 253h2M729 253h3M794 253h3M627 254h3M651 254h3M727 254h2M797 254h2M624 255h3M654 255h2M723 255h4M799 255h3M622 256h3M656 256h2M722 256h1M802 256h3M620 257h2M657 257h1M719 257h3M805 257h1M617 258h3M658 258h2M717 258h2M806 258h3M616 259h2M660 259h2M714 259h3M809 259h1M615 260h1M662 260h1M712 260h2M810 260h3M613 261h2M662 261h2M709 261h3M813 261h1M612 262h2M664 262h1M708 262h1M814 262h3M611 263h2M665 263h2M707 263h1M817 263h1M610 264h2M666 264h1M704 264h3M818 264h1M609 265h2M667 265h1M702 265h2M819 265h3M609 266h1M668 266h1M701 266h1M822 266h1M608 267h1M669 267h1M699 267h2M823 267h1M606 268h2M670 268h1M697 268h2M824 268h1M605 269h2M671 269h1M696 269h1M825 269h3M605 270h1M672 270h1M694 270h2M828 270h1M604 271h1M673 271h1M693 271h1M829 271h1M603 272h1M674 272h1M692 272h1M830 272h1M602 273h1M674 273h1M689 273h3M831 273h1M602 274h1M675 274h1M688 274h1M832 274h1M601 275h1M676 275h1M687 275h1M833 275h1M601 276h1M676 276h1M686 276h1M834 276h1M600 277h1M676 277h2M684 277h2M835 277h1M600 278h1M677 278h1M684 278h1M836 278h1M599 279h2M678 279h1M682 279h2M837 279h1M599 280h1M678 280h2M681 280h1M838 280h1M599 281h1M679 281h2M839 281h1M599 282h1M840 282h1M598 283h1M840 283h1M598 284h1M841 284h1M598 285h1M842 285h1M598 286h1M843 286h1M598 287h1M843 287h1M598 288h1M844 288h1M598 289h1M845 289h1M598 290h1M845 290h1M598 291h1M846 291h1M598 292h1M847 292h1M598 293h1M847 293h1M598 294h1M848 294h1M598 295h1M848 295h1M598 296h1M848 296h1M598 297h1M849 297h1M598 298h1M849 298h1M598 299h1M850 299h1M598 300h1M850 300h1M598 301h1M851 301h1M599 302h1M851 302h1M599 303h1M852 303h1M599 304h1M852 304h1M599 305h1M852 305h1M599 306h1M853 306h1M599 307h1M853 307h1M599 308h1M853 308h1M599 309h2M854 309h1M600 310h1M854 310h1M600 311h1M854 311h1M600 312h1M854 312h1M600 313h1M855 313h1M600 314h2M855 314h1M601 315h1M855 315h1M601 316h1M855 316h1M601 317h1M855 317h1M601 318h1M855 318h1M601 319h1M855 319h1M601 320h1M855 320h1M601 321h1M855 321h1M602 322h1M855 322h1M602 323h1M855 323h1M602 324h1M855 324h1"/>
<path stroke="#008000" d="M763 249h18M643 250h7M748 250h15M781 250h5M635 251h8M649 251h7M741 251h7M786 251h5M631 252h4M656 252h3M737 252h4M791 252h5M628 253h3M659 253h2M734 253h3M796 253h2M626 254h2M661 254h2M732 254h2M798 254h3M623 255h3M663 255h2M728 255h4M801 255h2M622 256h2M665 256h1M726 256h2M803 256h3M620 257h2M666 257h1M725 257h1M806 257h3M618 258h2M667 258h2M721 258h4M809 258h1M617 259h2M669 259h1M719 259h2M810 259h3M616 260h1M669 260h1M717 260h2M813 260h2M614 261h2M670 261h1M716 261h1M815 261h2M613 262h2M671 262h1M713 262h3M817 262h1M612 263h2M672 263h1M711 263h2M818 263h3M611 264h2M673 264h1M709 264h2M821 264h1M610 265h1M673 265h1M708 265h1M822 265h1M609 266h1M673 266h1M706 266h2M823 266h3M609 267h1M674 267h1M705 267h1M826 267h1M608 268h1M674 268h1M702 268h3M827 268h1M607 269h1M675 269h1M701 269h1M828 269h2M607 270h1M675 270h1M699 270h2M830 270h1M606 271h1M675 271h1M698 271h1M831 271h2M606 272h1M676 272h1M696 272h2M833 272h1M605 273h1M676 273h1M695 273h1M834 273h1M605 274h1M676 274h1M694 274h1M835 274h1M605 275h1M676 275h1M693 275h1M836 275h1M605 276h1M676 276h1M692 276h1M837 276h2M604 277h1M676 277h1M691 277h1M839 277h1M604 278h1M676 278h1M690 278h1M839 278h1M604 279h1M676 279h1M689 279h1M840 279h1M604 280h1M676 280h1M687 280h2M841 280h1M604 281h1M676 281h1M686 281h1M842 281h1M604 282h1M676 282h1M685 282h1M843 282h1M604 283h1M676 283h1M684 283h1M844 283h1M604 284h1M676 284h1M683 284h1M845 284h1M604 285h1M676 285h1M682 285h1M846 285h1M604 286h1M676 286h1M681 286h1M846 286h1M604 287h1M676 287h1M681 287h1M847 287h1M604 288h1M676 288h1M679 288h2M848 288h1M604 289h1M676 289h1M678 289h1M849 289h1M604 290h1M676 290h3M849 290h1M604 291h1M849 291h1M604 292h1M850 292h1M604 293h2M851 293h1M605 294h1M851 294h1M605 295h1M852 295h1M605 296h1M852 296h1M605 297h1M853 297h1M605 298h1M854 298h1M606 299h1M854 299h1M606 300h1M854 300h1M606 301h2M855 301h1M607 302h1M855 302h1M607 303h2M855 303h1M608 304h1M856 304h1M609 305h1M856 305h1M609 306h1M856 306h1M610 307h1M857 307h1M610 308h1M857 308h1M611 309h1M857 309h1M611 310h1M858 310h1M612 311h1M858 311h1M612 312h2M858 312h1M613 313h1M858 313h1M614 314h1M858 314h1M614 315h1M858 315h1M614 316h2M858 316h1M615 317h1M858 317h1M615 318h2M858 318h1M616 319h1M859 319h1M616 320h2M859 320h1M617 321h1M859 321h1M617 322h2M859 322h1M618 323h1M859 323h1M618 324h1M859 324h1"/>
<path stroke="#808000" d="M757 249h25M640 250h15M749 250h8M782 250h6M635 251h5M655 251h4M745 251h4M788 251h5M631 252h4M659 252h2M741 252h4M793 252h3M628 253h3M661 253h2M739 253h2M796 253h3M627 254h1M663 254h2M735 254h4M799 254h3M624 255h3M665 255h2M734 255h1M802 255h3M623 256h2M666 256h2M730 256h4M805 256h3M622 257h1M668 257h1M728 257h2M808 257h3M620 258h2M669 258h1M726 258h2M811 258h1M619 259h2M670 259h1M724 259h2M812 259h3M618 260h1M671 260h1M722 260h2M815 260h2M617 261h1M672 261h1M720 261h2M817 261h3M616 262h1M672 262h1M718 262h2M820 262h1M615 263h2M673 263h1M716 263h2M821 263h3M614 264h2M673 264h1M714 264h2M824 264h1M614 265h1M674 265h1M713 265h1M825 265h1M613 266h1M675 266h1M711 266h2M826 266h2M613 267h1M675 267h1M709 267h2M828 267h2M612 268h1M675 268h1M708 268h1M830 268h2M612 269h1M676 269h1M706 269h2M832 269h1M611 270h1M676 270h1M704 270h2M833 270h1M611 271h1M676 271h1M703 271h1M834 271h1M611 272h1M676 272h1M701 272h2M835 272h1M610 273h1M677 273h1M700 273h1M836 273h3M610 274h1M677 274h1M699 274h1M839 274h1M610 275h1M677 275h1M698 275h1M840 275h1M610 276h1M677 276h1M696 276h2M841 276h1M610 277h1M677 277h1M695 277h1M842 277h1M610 278h1M677 278h1M694 278h1M843 278h1M610 279h1M677 279h1M693 279h1M844 279h1M610 280h1M677 280h1M692 280h1M845 280h1M610 281h1M677 281h1M691 281h1M846 281h1M610 282h1M677 282h1M690 282h1M847 282h1M610 283h1M677 283h1M689 283h1M848 283h1M610 284h1M677 284h1M688 284h1M849 284h1M610 285h1M677 285h1M687 285h1M849 285h1M610 286h1M677 286h1M686 286h1M849 286h1M611 287h1M677 287h1M686 287h1M850 287h1M611 288h1M677 288h1M684 288h2M851 288h1M611 289h1M677 289h1M683 289h1M852 289h1M612 290h1M677 290h1M683 290h1M853 290h1M612 291h1M677 291h1M682 291h1M854 291h1M613 292h1M677 292h1M681 292h1M854 292h1M613 293h1M677 293h1M680 293h1M855 293h1M613 294h2M677 294h1M680 294h1M856 294h1M614 295h1M677 295h1M679 295h1M856 295h1M615 296h1M677 296h2M856 296h1M615 297h2M857 297h1M616 298h1M857 298h1M617 299h1M858 299h1M617 300h2M858 300h1M618 301h1M859 301h1M619 302h1M859 302h1M620 303h1M859 303h1M620 304h2M859 304h1M621 305h2M860 305h1M623 306h1M860 306h1M623 307h2M860 307h1M624 308h2M860 308h1M626 309h1M861 309h1M627 310h1M861 310h1M628 311h1M861 311h1M629 312h2M861 312h1M631 313h1M861 313h1M632 314h2M862 314h1M633 315h2M862 315h1M634 316h2M862 316h1M636 317h2M862 317h1M637 318h2M862 318h1M639 319h1M862 319h1M639 320h2M862 320h1M640 321h1M862 321h1M640 322h1M862 322h1M638 323h2M862 323h1M638 324h1M862 324h1"/>
<path stroke="#000080" d="M770 248h3M640 249h18M762 249h8M773 249h9M635 250h5M658 250h2M755 250h7M782 250h6M632 251h4M660 251h2M751 251h4M788 251h5M629 252h3M662 252h3M745 252h6M793 252h3M628 253h2M665 253h2M743 253h2M796 253h5M627 254h1M666 254h2M739 254h4M801 254h3M625 255h2M668 255h1M736 255h3M804 255h3M624 256h2M669 256h2M734 256h2M807 256h3M623 257h1M670 257h1M730 257h4M810 257h2M622 258h2M671 258h2M728 258h2M812 258h3M621 259h2M673 259h1M726 259h2M815 259h3M621 260h1M673 260h1M724 260h2M818 260h2M620 261h1M674 261h1M722 261h2M820 261h2M619 262h1M674 262h1M720 262h2M822 262h2M619 263h1M675 263h1M719 263h1M824 263h1M618 264h1M676 264h1M718 264h1M825 264h3M618 265h1M676 265h1M716 265h2M828 265h2M617 266h1M676 266h1M714 266h2M830 266h1M617 267h1M677 267h1M712 267h2M831 267h1M617 268h1M677 268h1M710 268h2M832 268h3M616 269h1M677 269h1M709 269h1M835 269h1M616 270h1M677 270h1M708 270h1M836 270h1M616 271h1M678 271h1M706 271h2M837 271h2M616 272h1M678 272h1M704 272h2M839 272h1M616 273h1M678 273h1M703 273h1M840 273h1M616 274h1M678 274h1M702 274h1M841 274h1M616 275h1M678 275h1M700 275h2M842 275h1M616 276h1M678 276h1M699 276h1M843 276h2M616 277h1M679 277h1M698 277h1M845 277h1M616 278h1M679 278h1M697 278h1M846 278h1M616 279h1M679 279h1M697 279h1M847 279h1M616 280h1M679 280h1M695 280h2M848 280h1M616 281h1M679 281h1M694 281h1M849 281h1M616 282h1M679 282h1M693 282h1M850 282h1M616 283h1M679 283h1M692 283h1M851 283h1M617 284h1M679 284h1M691 284h1M852 284h1M617 285h1M679 285h1M690 285h1M852 285h1M617 286h1M679 286h1M689 286h1M853 286h1M618 287h1M679 287h1M688 287h1M854 287h1M618 288h1M679 288h1M687 288h1M855 288h1M618 289h1M679 289h1M687 289h1M856 289h1M619 290h1M679 290h1M685 290h2M857 290h1M619 291h1M679 291h1M684 291h1M857 291h1M620 292h1M679 292h1M684 292h1M858 292h1M621 293h1M678 293h1M683 293h1M859 293h1M621 294h1M678 294h1M681 294h2M859 294h1M622 295h1M678 295h1M680 295h1M860 295h1M623 296h1M678 296h1M680 296h1M860 296h1M623 297h2M678 297h2M861 297h1M625 298h1M678 298h1M861 298h1M625 299h1M861 299h1M626 300h1M862 300h1M627 301h1M862 301h1M627 302h2M863 302h1M629 303h1M863 303h1M629 304h1M863 304h1M630 305h1M863 305h1M631 306h2M864 306h1M633 307h1M864 307h1M634 308h1M864 308h1M635 309h1M864 309h1M636 310h2M864 310h1M638 311h1M865 311h1M639 312h2M865 312h1M641 313h2M865 313h1M643 314h2M865 314h1M617 315h18M645 315h1M865 315h1M614 316h3M635 316h4M646 316h2M865 316h1M612 317h3M639 317h6M648 317h2M865 317h1M611 318h1M645 318h3M650 318h2M865 318h1M609 319h2M648 319h3M652 319h3M865 319h1M608 320h2M651 320h6M865 320h1M607 321h2M656 321h2M865 321h1M607 322h1M865 322h1M606 323h1M865 323h1M606 324h1M866 324h1"/>
</g>
</svg>
</div>
<div class="abs btn" style="left:754px;top:388px;width:117px;height:34px;line-height:30px;">Colors</div>
<div class="abs" style="left:388px;top:430px;width:496px;height:183px;box-sizing:border-box;background:#fff;border:1px solid;border-color:#a0a0a0 #fff #fff #a0a0a0;box-shadow:inset 1px 1px 0 #696969, inset -1px -1px 0 #e3e3e3;"></div>
<div class="abs" style="left:390px;top:433px;width:69px;height:19px;background:#f0f0f0;border-right:1px solid #000;border-bottom:1px solid #000;overflow:hidden;"><div class="abs" style="left:4px;top:1px;line-height:22px;white-space:nowrap;">Freq</div></div>
<div class="abs" style="left:460px;top:433px;width:56px;height:19px;background:#f0f0f0;border-right:1px solid #000;border-bottom:1px solid #000;overflow:hidden;"><div class="abs" style="left:4px;top:1px;line-height:22px;white-space:nowrap;">R</div></div>
<div class="abs" style="left:517px;top:433px;width:63px;height:19px;background:#f0f0f0;border-right:1px solid #000;border-bottom:1px solid #000;overflow:hidden;"><div class="abs" style="left:4px;top:1px;line-height:22px;white-space:nowrap;">jX</div></div>
<div class="abs" style="left:581px;top:433px;width:56px;height:19px;background:#f0f0f0;border-right:1px solid #000;border-bottom:1px solid #000;overflow:hidden;"><div class="abs" style="left:4px;top:1px;line-height:22px;white-space:nowrap;">Ga</div></div>
<div class="abs" style="left:638px;top:433px;width:53px;height:19px;background:#f0f0f0;border-right:1px solid #000;border-bottom:1px solid #000;overflow:hidden;"><div class="abs" style="left:4px;top:1px;line-height:22px;white-space:nowrap;">F/B</div></div>
<div class="abs" style="left:692px;top:433px;width:45px;height:19px;background:#f0f0f0;border-right:1px solid #000;border-bottom:1px solid #000;overflow:hidden;"><div class="abs" style="left:4px;top:1px;line-height:22px;white-space:nowrap;">ON</div></div>
<div class="abs" style="left:390px;top:473px;width:348px;height:1px;background:#c0c0c0;"></div>
<div class="abs" style="left:390px;top:494px;width:348px;height:1px;background:#c0c0c0;"></div>
<div class="abs" style="left:390px;top:515px;width:348px;height:1px;background:#c0c0c0;"></div>
<div class="abs" style="left:390px;top:536px;width:348px;height:1px;background:#c0c0c0;"></div>
<div class="abs" style="left:390px;top:557px;width:348px;height:1px;background:#c0c0c0;"></div>
<div class="abs" style="left:459px;top:453px;width:1px;height:105px;background:#c0c0c0;"></div>
<div class="abs" style="left:516px;top:453px;width:1px;height:105px;background:#c0c0c0;"></div>
<div class="abs" style="left:580px;top:453px;width:1px;height:105px;background:#c0c0c0;"></div>
<div class="abs" style="left:637px;top:453px;width:1px;height:105px;background:#c0c0c0;"></div>
<div class="abs" style="left:691px;top:453px;width:1px;height:105px;background:#c0c0c0;"></div>
<div class="abs" style="left:737px;top:453px;width:1px;height:105px;background:#c0c0c0;"></div>
<div class="abs" style="left:390px;top:453px;width:69px;height:21px;background:#0078d7;"></div>
<div class="abs" style="left:390px;top:455px;height:19px;overflow:hidden;line-height:22px;padding-left:2px;color:#000;background:transparent;white-space:nowrap;">425.0</div>
<div class="abs" style="left:460px;top:455px;height:19px;overflow:hidden;line-height:22px;padding-left:2px;color:#000;background:#fff;white-space:nowrap;">43.1</div>
<div class="abs" style="left:517px;top:455px;height:19px;overflow:hidden;line-height:22px;padding-left:2px;color:#000;background:#fff;white-space:nowrap;">-34.2</div>
<div class="abs" style="left:581px;top:455px;height:19px;overflow:hidden;line-height:22px;padding-left:2px;color:#000;background:#fff;white-space:nowrap;">8.9</div>
<div class="abs" style="left:638px;top:455px;height:19px;overflow:hidden;line-height:22px;padding-left:2px;color:#000;background:#fff;white-space:nowrap;">10.5</div>
<div class="abs" style="left:692px;top:455px;height:19px;overflow:hidden;line-height:22px;padding-left:2px;color:#000;background:#fff;white-space:nowrap;">On</div>
<div class="abs" style="left:390px;top:476px;height:19px;overflow:hidden;line-height:22px;padding-left:2px;color:#800000;background:#fff;white-space:nowrap;">430.0</div>
<div class="abs" style="left:460px;top:476px;height:19px;overflow:hidden;line-height:22px;padding-left:2px;color:#800000;background:#fff;white-space:nowrap;">39.2</div>
<div class="abs" style="left:517px;top:476px;height:19px;overflow:hidden;line-height:22px;padding-left:2px;color:#800000;background:#fff;white-space:nowrap;">-29.2</div>
<div class="abs" style="left:581px;top:476px;height:19px;overflow:hidden;line-height:22px;padding-left:2px;color:#800000;background:#fff;white-space:nowrap;">9.1</div>
<div class="abs" style="left:638px;top:476px;height:19px;overflow:hidden;line-height:22px;padding-left:2px;color:#800000;background:#fff;white-space:nowrap;">10.7</div>
<div class="abs" style="left:692px;top:476px;height:19px;overflow:hidden;line-height:22px;padding-left:2px;color:#800000;background:#fff;white-space:nowrap;">On</div>
<div class="abs" style="left:390px;top:497px;height:19px;overflow:hidden;line-height:22px;padding-left:2px;color:#008000;background:#fff;white-space:nowrap;">435.0</div>
<div class="abs" style="left:460px;top:497px;height:19px;overflow:hidden;line-height:22px;padding-left:2px;color:#008000;background:#fff;white-space:nowrap;">35.2</div>
<div class="abs" style="left:517px;top:497px;height:19px;overflow:hidden;line-height:22px;padding-left:2px;color:#008000;background:#fff;white-space:nowrap;">-22.4</div>
<div class="abs" style="left:581px;top:497px;height:19px;overflow:hidden;line-height:22px;padding-left:2px;color:#008000;background:#fff;white-space:nowrap;">9.4</div>
<div class="abs" style="left:638px;top:497px;height:19px;overflow:hidden;line-height:22px;padding-left:2px;color:#008000;background:#fff;white-space:nowrap;">11.2</div>
<div class="abs" style="left:692px;top:497px;height:19px;overflow:hidden;line-height:22px;padding-left:2px;color:#008000;background:#fff;white-space:nowrap;">On</div>
<div class="abs" style="left:390px;top:518px;height:19px;overflow:hidden;line-height:22px;padding-left:2px;color:#808000;background:#fff;white-space:nowrap;">440.0</div>
<div class="abs" style="left:460px;top:518px;height:19px;overflow:hidden;line-height:22px;padding-left:2px;color:#808000;background:#fff;white-space:nowrap;">31.8</div>
<div class="abs" style="left:517px;top:518px;height:19px;overflow:hidden;line-height:22px;padding-left:2px;color:#808000;background:#fff;white-space:nowrap;">-13.4</div>
<div class="abs" style="left:581px;top:518px;height:19px;overflow:hidden;line-height:22px;padding-left:2px;color:#808000;background:#fff;white-space:nowrap;">9.7</div>
<div class="abs" style="left:638px;top:518px;height:19px;overflow:hidden;line-height:22px;padding-left:2px;color:#808000;background:#fff;white-space:nowrap;">11.9</div>
<div class="abs" style="left:692px;top:518px;height:19px;overflow:hidden;line-height:22px;padding-left:2px;color:#808000;background:#fff;white-space:nowrap;">On</div>
<div class="abs" style="left:390px;top:539px;height:19px;overflow:hidden;line-height:22px;padding-left:2px;color:#000080;background:#fff;white-space:nowrap;">445.0</div>
<div class="abs" style="left:460px;top:539px;height:19px;overflow:hidden;line-height:22px;padding-left:2px;color:#000080;background:#fff;white-space:nowrap;">30.2</div>
<div class="abs" style="left:517px;top:539px;height:19px;overflow:hidden;line-height:22px;padding-left:2px;color:#000080;background:#fff;white-space:nowrap;">-2.2</div>
<div class="abs" style="left:581px;top:539px;height:19px;overflow:hidden;line-height:22px;padding-left:2px;color:#000080;background:#fff;white-space:nowrap;">10.0</div>
<div class="abs" style="left:638px;top:539px;height:19px;overflow:hidden;line-height:22px;padding-left:2px;color:#000080;background:#fff;white-space:nowrap;">13.0</div>
<div class="abs" style="left:692px;top:539px;height:19px;overflow:hidden;line-height:22px;padding-left:2px;color:#000080;background:#fff;white-space:nowrap;">On</div>
<div class="abs" style="left:5px;top:554px;width:372px;height:58px;box-sizing:border-box;border:1px solid #a0a0a0;box-shadow:1px 1px 0 #fff, inset 1px 1px 0 #fff;"></div>
<div class="abs" style="left:11px;top:545px;line-height:22px;background:#f0f0f0;padding:0 2px;">Field(s)</div>
<svg class="abs" style="left:13px;top:580px" width="14" height="14" viewBox="0 0 14 14"><circle cx="7" cy="7" r="5.5" fill="#fff" stroke="#a0a0a0" stroke-width="1"/><path d="M2.9 11.1A5.8 5.8 0 0 1 11.1 2.9" fill="none" stroke="#696969" stroke-width="1.2"/><path d="M11.1 2.9A5.8 5.8 0 0 1 2.9 11.1" fill="none" stroke="#fff" stroke-width="1.2"/></svg>
<div class="abs" style="left:33px;top:577px;line-height:22px;white-space:nowrap;">V</div>
<svg class="abs" style="left:102.5px;top:580px" width="14" height="14" viewBox="0 0 14 14"><circle cx="7" cy="7" r="5.5" fill="#fff" stroke="#a0a0a0" stroke-width="1"/><path d="M2.9 11.1A5.8 5.8 0 0 1 11.1 2.9" fill="none" stroke="#696969" stroke-width="1.2"/><path d="M11.1 2.9A5.8 5.8 0 0 1 2.9 11.1" fill="none" stroke="#fff" stroke-width="1.2"/></svg>
<div class="abs" style="left:122.5px;top:577px;line-height:22px;white-space:nowrap;">H</div>
<svg class="abs" style="left:193px;top:580px" width="14" height="14" viewBox="0 0 14 14"><circle cx="7" cy="7" r="5.5" fill="#fff" stroke="#a0a0a0" stroke-width="1"/><path d="M2.9 11.1A5.8 5.8 0 0 1 11.1 2.9" fill="none" stroke="#696969" stroke-width="1.2"/><path d="M11.1 2.9A5.8 5.8 0 0 1 2.9 11.1" fill="none" stroke="#fff" stroke-width="1.2"/><circle cx="7" cy="7" r="2" fill="#000"/></svg>
<div class="abs" style="left:214px;top:577px;line-height:22px;white-space:nowrap;">Total</div>
<svg class="abs" style="left:283px;top:580px" width="14" height="14" viewBox="0 0 14 14"><circle cx="7" cy="7" r="5.5" fill="#fff" stroke="#a0a0a0" stroke-width="1"/><path d="M2.9 11.1A5.8 5.8 0 0 1 11.1 2.9" fill="none" stroke="#696969" stroke-width="1.2"/><path d="M11.1 2.9A5.8 5.8 0 0 1 2.9 11.1" fill="none" stroke="#fff" stroke-width="1.2"/></svg>
<div class="abs" style="left:304px;top:577px;line-height:22px;white-space:nowrap;">V+H</div>
</body></html>
